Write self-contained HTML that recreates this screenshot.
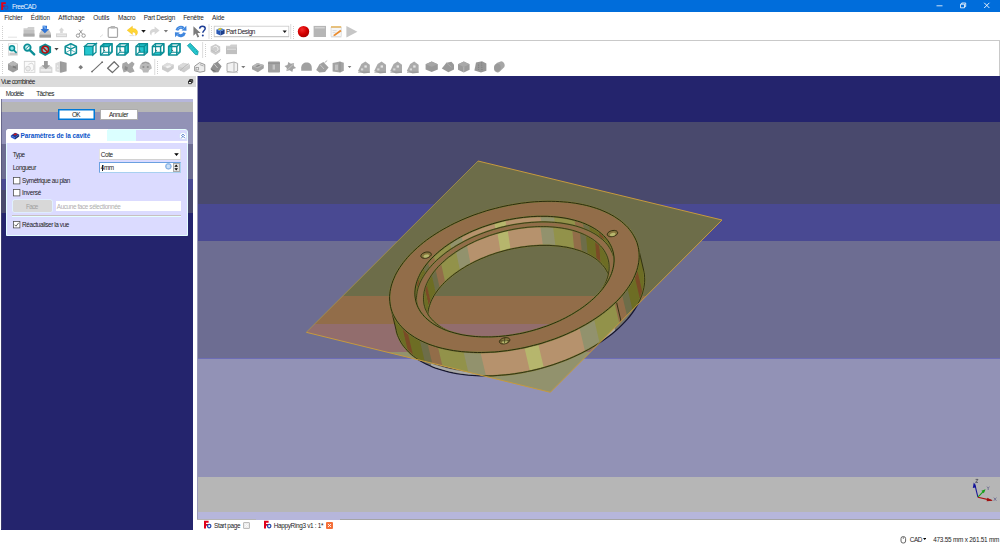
<!DOCTYPE html>
<html><head><meta charset="utf-8"><title>FreeCAD</title>
<style>
*{box-sizing:border-box;margin:0;padding:0}
html,body{width:1000px;height:547px;overflow:hidden;background:#fff}
body{font-family:"Liberation Sans",sans-serif;font-size:6.4px;color:#000;position:relative}
.abs{position:absolute}
.t{position:absolute;white-space:nowrap;line-height:9px;font-size:6.4px;color:#1c1c1c}
#title{left:0;top:0;width:1000px;height:12px;background:#006ddb}
.hl{position:absolute;height:1px;background:#c9c9c9}
.vl{position:absolute;width:1px;background:#c9c9c9}
.cb{position:absolute;width:7px;height:7px;border:1px solid #333;background:#fff}
</style></head><body>

<!-- title bar -->
<div id="title" class="abs"></div>
<svg class="abs" style="left:0;top:1px" width="10" height="10" viewBox="0 0 10 10">
  <path d="M1.2 1.2h4.6v1.8H3.2v1.4h2v1.7h-2v2.9H1.2z" fill="#e0001a"/>
  <circle cx="6.2" cy="6.6" r="1.7" fill="none" stroke="#2a4fb0" stroke-width="1.1"/>
</svg>
<div class="t" style="letter-spacing:-0.498px;left:12px;top:1.7px;color:#f0f6ff;font-size:6.6px">FreeCAD</div>
<svg class="abs" style="left:930px;top:0" width="70" height="12" viewBox="0 0 70 12">
  <path d="M6.5 5.8h6" stroke="#fff" stroke-width="0.8"/>
  <path d="M30.5 4.2h4v3.6h-4z M31.7 4.2v-1.2h4v3.6h-1.2" fill="none" stroke="#fff" stroke-width="0.8"/>
  <path d="M54.2 2.8l5.2 5.2M59.4 2.8l-5.2 5.2" stroke="#fff" stroke-width="0.9"/>
</svg>

<!-- menu -->
<div class="t" style="letter-spacing:-0.141px;left:4.2px;top:12.7px">Fichier</div>
<div class="t" style="letter-spacing:-0.050px;left:30.8px;top:12.7px">Édition</div>
<div class="t" style="letter-spacing:0.019px;left:58.2px;top:12.7px">Affichage</div>
<div class="t" style="letter-spacing:-0.024px;left:93.2px;top:12.7px">Outils</div>
<div class="t" style="letter-spacing:-0.053px;left:118px;top:12.7px">Macro</div>
<div class="t" style="letter-spacing:-0.199px;left:143.8px;top:12.7px">Part Design</div>
<div class="t" style="letter-spacing:-0.219px;left:183.2px;top:12.7px">Fenêtre</div>
<div class="t" style="letter-spacing:-0.074px;left:212px;top:12.7px">Aide</div>

<!-- toolbar frame lines -->
<div class="hl" style="left:0;top:40px;width:1000px"></div>
<div class="vl" style="left:999px;top:40px;height:36px"></div>

<!-- TOOLBARS -->
<svg id="tb" class="abs" style="left:0;top:23px" width="1000" height="53" viewBox="0 23 1000 53">
<rect x="2.2" y="26.0" width="0.8" height="0.8" fill="#b4b4b4"/>
<rect x="2.2" y="28.0" width="0.8" height="0.8" fill="#b4b4b4"/>
<rect x="2.2" y="30.0" width="0.8" height="0.8" fill="#b4b4b4"/>
<rect x="2.2" y="32.0" width="0.8" height="0.8" fill="#b4b4b4"/>
<rect x="2.2" y="34.0" width="0.8" height="0.8" fill="#b4b4b4"/>
<rect x="2.2" y="36.0" width="0.8" height="0.8" fill="#b4b4b4"/>
<rect x="2.2" y="38.0" width="0.8" height="0.8" fill="#b4b4b4"/>
<rect x="2.2" y="44.0" width="0.8" height="0.8" fill="#b4b4b4"/>
<rect x="2.2" y="46.0" width="0.8" height="0.8" fill="#b4b4b4"/>
<rect x="2.2" y="48.0" width="0.8" height="0.8" fill="#b4b4b4"/>
<rect x="2.2" y="50.0" width="0.8" height="0.8" fill="#b4b4b4"/>
<rect x="2.2" y="52.0" width="0.8" height="0.8" fill="#b4b4b4"/>
<rect x="2.2" y="54.0" width="0.8" height="0.8" fill="#b4b4b4"/>
<rect x="2.2" y="56.0" width="0.8" height="0.8" fill="#b4b4b4"/>
<rect x="2.2" y="61.0" width="0.8" height="0.8" fill="#b4b4b4"/>
<rect x="2.2" y="63.0" width="0.8" height="0.8" fill="#b4b4b4"/>
<rect x="2.2" y="65.0" width="0.8" height="0.8" fill="#b4b4b4"/>
<rect x="2.2" y="67.0" width="0.8" height="0.8" fill="#b4b4b4"/>
<rect x="2.2" y="69.0" width="0.8" height="0.8" fill="#b4b4b4"/>
<rect x="2.2" y="71.0" width="0.8" height="0.8" fill="#b4b4b4"/>
<rect x="2.2" y="73.0" width="0.8" height="0.8" fill="#b4b4b4"/>
<rect x="208.6" y="24.0" width="0.8" height="15.0" fill="#d4d4d4"/>
<rect x="211.0" y="26.0" width="0.8" height="0.8" fill="#b4b4b4"/>
<rect x="211.0" y="28.0" width="0.8" height="0.8" fill="#b4b4b4"/>
<rect x="211.0" y="30.0" width="0.8" height="0.8" fill="#b4b4b4"/>
<rect x="211.0" y="32.0" width="0.8" height="0.8" fill="#b4b4b4"/>
<rect x="211.0" y="34.0" width="0.8" height="0.8" fill="#b4b4b4"/>
<rect x="211.0" y="36.0" width="0.8" height="0.8" fill="#b4b4b4"/>
<rect x="211.0" y="38.0" width="0.8" height="0.8" fill="#b4b4b4"/>
<rect x="290.4" y="24.0" width="0.8" height="15.0" fill="#d4d4d4"/>
<rect x="293.2" y="26.0" width="0.8" height="0.8" fill="#b4b4b4"/>
<rect x="293.2" y="28.0" width="0.8" height="0.8" fill="#b4b4b4"/>
<rect x="293.2" y="30.0" width="0.8" height="0.8" fill="#b4b4b4"/>
<rect x="293.2" y="32.0" width="0.8" height="0.8" fill="#b4b4b4"/>
<rect x="293.2" y="34.0" width="0.8" height="0.8" fill="#b4b4b4"/>
<rect x="293.2" y="36.0" width="0.8" height="0.8" fill="#b4b4b4"/>
<rect x="293.2" y="38.0" width="0.8" height="0.8" fill="#b4b4b4"/>
<rect x="202.3" y="42.0" width="0.8" height="16.0" fill="#d4d4d4"/>
<rect x="205.2" y="44.0" width="0.8" height="0.8" fill="#b4b4b4"/>
<rect x="205.2" y="46.0" width="0.8" height="0.8" fill="#b4b4b4"/>
<rect x="205.2" y="48.0" width="0.8" height="0.8" fill="#b4b4b4"/>
<rect x="205.2" y="50.0" width="0.8" height="0.8" fill="#b4b4b4"/>
<rect x="205.2" y="52.0" width="0.8" height="0.8" fill="#b4b4b4"/>
<rect x="205.2" y="54.0" width="0.8" height="0.8" fill="#b4b4b4"/>
<rect x="205.2" y="56.0" width="0.8" height="0.8" fill="#b4b4b4"/>
<rect x="154.4" y="59.0" width="0.8" height="16.0" fill="#d4d4d4"/>
<rect x="157.1" y="61.0" width="0.8" height="0.8" fill="#b4b4b4"/>
<rect x="157.1" y="63.0" width="0.8" height="0.8" fill="#b4b4b4"/>
<rect x="157.1" y="65.0" width="0.8" height="0.8" fill="#b4b4b4"/>
<rect x="157.1" y="67.0" width="0.8" height="0.8" fill="#b4b4b4"/>
<rect x="157.1" y="69.0" width="0.8" height="0.8" fill="#b4b4b4"/>
<rect x="157.1" y="71.0" width="0.8" height="0.8" fill="#b4b4b4"/>
<rect x="157.1" y="73.0" width="0.8" height="0.8" fill="#b4b4b4"/>
<path d="M8 37.2h9" stroke="#dcdcdc" stroke-width="0.8"/>
<path d="M23.5 28.3h3.6l1-1.3h6.2v3h-10.8z" fill="#cfcfcf"/><path d="M23.5 30h11v6.5h-11z" fill="#c2c2c2"/><path d="M23.5 33.6h11v2.9h-11z" fill="#a9a9a9"/>
<path d="M39.5 33.2l2-3.2h7.5l2 3.2v4.3h-11.5z" fill="#c6c6c6"/><path d="M39.5 34.6h11.5v2.9h-11.5z" fill="#9c9c9c"/>
<path d="M42.6 25.8h4.4v3.2h2.2l-4.3 4.3-4.4-4.3h2.1z" fill="#2f74d6"/><path d="M42.6 25.8h2.4l2 3.2h-2.3z" fill="#6aa4ee"/>
<path d="M56 33.4h11v3.8h-11z" fill="#d4d4d4"/><path d="M57 34.6h9v1.4h-9z" fill="#e8e8e8"/><path d="M60.2 33v-2.6h-1.5l2.8-2.8 2.8 2.8h-1.5v2.6z" fill="#d8d8d8"/>
<g fill="none" stroke="#8e8e8e" stroke-width="0.9"><circle cx="78" cy="35.6" r="1.7"/><circle cx="83.6" cy="35.6" r="1.7"/><path d="M79 34.2l3.4-4.4M82.6 34.2l-3.4-4.4"/></g>
<path d="M100 37l3-2.4" stroke="#d0d0d0" stroke-width="0.7"/>
<rect x="108.2" y="27.6" width="9.3" height="9.8" rx="1.2" fill="#fff" stroke="#a6a6a6" stroke-width="1.2"/><rect x="110.6" y="26" width="4.5" height="2.4" rx=".6" fill="#b4b4b4"/>
<path d="M132.4 26.2l-5.2 4.1 5.2 4.1v-2.4c2.3-.1 3.6 1 3.3 3.6 1.7-1.1 2.1-2.9 1.6-4.4-.7-2-2.5-2.7-4.9-2.7z" fill="#ffd633" stroke="#f0b400" stroke-width=".4"/><path d="M129.5 35.6h5" stroke="#e0e0e0" stroke-width="1"/>
<path d="M141.2 30.1 H145.8 L143.5 32.7Z" fill="#1a1a1a"/>
<path d="M154.6 26.6l5 3.9-5 3.9v-2.3c-2.2-.1-3.4 1-3.1 3.4-1.6-1-2-2.7-1.5-4.1.6-1.9 2.3-2.5 4.6-2.5z" fill="#d6d6d6"/>
<path d="M163.8 30.1 H168.0 L165.9 32.5Z" fill="#7a7a7a"/>
<g fill="none" stroke="#3f86de" stroke-width="2.9"><path d="M176.9 30.4a4 4 0 0 1 6.6-2"/><path d="M184.5 32.6a4 4 0 0 1 -6.6 2"/></g>
<path d="M181.6 30.4l4.9.4-.2-5z" fill="#3f86de"/><path d="M179.8 32.6l-4.9-.4.2 5z" fill="#3f86de"/>
<path d="M177.6 29.2a3.6 3.6 0 0 1 4.6-1.4" fill="none" stroke="#8dbcf2" stroke-width=".8"/>
<path d="M193.4 26.2v9.6l2.4-2.2 1.7 3.9 1.7-.8-1.7-3.7h3.1z" fill="#7c7c7c"/>
<path d="M199.6 28.6c.2-1.6 1.4-2.4 2.8-2.4 1.6 0 2.8 1 2.8 2.4 0 1.9-2.4 2-2.4 4.2" fill="none" stroke="#1f3f96" stroke-width="1.5"/><circle cx="202.8" cy="35.6" r="1" fill="#1f3f96"/>
<rect x="214.2" y="26.2" width="74.6" height="10.4" fill="#fff" stroke="#c9c9c9" stroke-width="0.8"/><path d="M214 36.8h75" stroke="#bdbdbd" stroke-width="0.7"/>
<path d="M216.4 29.6l4.2 1.6v4.2l-4.2-1.6z" fill="#2a58b4"/><path d="M220.6 31.2l4-1.7v4.2l-4 1.7z" fill="#1d3f8c"/><path d="M216.4 29.6l4-1.9 4.2 1.8-4 1.7z" fill="#4a86d8"/><path d="M217.6 29.3l2.6-1.4 2.2.9-2.6 1.4z" fill="#e8c828"/>
<path d="M282.6 30.6 H286.8 L284.7 33.0Z" fill="#1a1a1a"/>
<radialGradient id="rg" cx=".38" cy=".32" r=".75"><stop offset="0" stop-color="#f42a2a"/><stop offset=".55" stop-color="#d40000"/><stop offset="1" stop-color="#a00000"/></radialGradient>
<circle cx="303.5" cy="31.6" r="5.7" fill="url(#rg)"/>
<rect x="313.6" y="25.9" width="12.4" height="11.1" fill="#b6b6b6"/><rect x="314.8" y="27" width="10" height="1.5" fill="#d2d2d2"/>
<rect x="331" y="27.6" width="10.2" height="9" fill="#f6f6f6" stroke="#cfcfcf" stroke-width=".6"/><rect x="331" y="26.2" width="10.2" height="1.5" fill="#e4b25a"/><path d="M332.6 30.6h4M332.6 32.6h3" stroke="#cfcfcf" stroke-width=".7"/><path d="M334 34.6l6.4-4.8 1.1 1.4-6.4 4.6-1.8.5z" fill="#ea8a2a"/><path d="M331 37h10.4" stroke="#d9d9d9" stroke-width=".8"/>
<path d="M346.4 25.9v11.6l11-5.8z" fill="#c6c6c6"/>
<rect x="8.4" y="43.8" width="9" height="11.4" fill="#fff" stroke="#c9c9c9" stroke-width=".6"/><path d="M9.4 52.6h7.6v2.4h-7.6z" fill="#c9c9c9"/>
<circle cx="12" cy="48.2" r="2.5" fill="#8fe6ea" stroke="#0b8e96" stroke-width="1.5"/><path d="M13.8 50.2l2.8 2.6" stroke="#0b8e96" stroke-width="1.8"/>
<circle cx="27.4" cy="47.6" r="3.2" fill="#dff8f8" stroke="#0b8e96" stroke-width="1.9"/><path d="M29.8 50.2l4.4 4.2" stroke="#0b8e96" stroke-width="2.4" stroke-linecap="round"/><path d="M25.8 48.8l3-2.6" stroke="#0b8e96" stroke-width="1"/>
<path d="M45.2 43.4l5.9 3.1v6.3l-5.9 3.1-5.9-3.1v-6.3z" fill="#0b8e96"/><circle cx="45.2" cy="49.6" r="3.3" fill="#7cc6c8" stroke="#b40e10" stroke-width="1.5"/><path d="M43 47.4l4.4 4.4" stroke="#b40e10" stroke-width="1.4"/>
<path d="M54.4 48.0 H58.6 L56.5 50.6Z" fill="#444"/>
<path d="M70.8 43.8l5.6 2.6v6.6l-5.6 2.6-5.6-2.6v-6.6z" fill="#fff" stroke="#0b8e96" stroke-width="1.5" stroke-linejoin="round"/><path d="M65.2 46.4l5.6 2.6 5.6-2.6M70.8 49v6.4" fill="none" stroke="#0b8e96" stroke-width="1.2"/><path d="M70.8 44v4.4M66 52.4l4.8-2.6 4.8 2.6" fill="none" stroke="#0b8e96" stroke-width=".7"/>
<path d="M84.6 46.4 L87.8 43.6 L96.0 43.6 L96.0 52.2 L92.8 55.0 L84.6 55.0Z" fill="#fff"/>
<path d="M84.6 46.4 L87.8 43.6 L96.0 43.6 L92.8 46.4Z" fill="#fff" stroke="#0b8e96" stroke-width="1.3"/>
<path d="M92.8 46.4 L96.0 43.6 L96.0 52.2 L92.8 55.0Z" fill="#fff" stroke="#0b8e96" stroke-width="1.3"/>
<path d="M84.6 46.4 L92.8 46.4 L92.8 55.0 L84.6 55.0Z" fill="#25c6ce" stroke="#0b8e96" stroke-width="1.1"/>
<path d="M100.6 46.4 L103.8 43.6 L112.0 43.6 L112.0 52.2 L108.8 55.0 L100.6 55.0Z" fill="#fff"/>
<path d="M100.6 46.4 L103.8 43.6 L112.0 43.6 L108.8 46.4Z" fill="#25c6ce"/>
<path d="M103.8 43.6 L112.0 43.6 L112.0 52.2 L103.8 52.2Z" fill="none" stroke="#0b8e96" stroke-width="1.05" stroke-linejoin="round"/>
<path d="M100.6 55.0 L103.8 52.2" stroke="#0b8e96" stroke-width="1.05"/>
<path d="M103.6 49.8 l1.6 1.2" stroke="#1a3a40" stroke-width=".7"/>
<path d="M100.6 46.4 L108.8 46.4 L108.8 55.0 L100.6 55.0Z" fill="none" stroke="#0b8e96" stroke-width="1.45" stroke-linejoin="round"/>
<path d="M100.6 46.4 L103.8 43.6" stroke="#0b8e96" stroke-width="1.35"/>
<path d="M108.8 46.4 L112.0 43.6" stroke="#0b8e96" stroke-width="1.35"/>
<path d="M108.8 55.0 L112.0 52.2" stroke="#0b8e96" stroke-width="1.35"/>
<path d="M103.8 43.6 L112.0 43.6 L112.0 52.2" fill="none" stroke="#0b8e96" stroke-width="1.45" stroke-linejoin="round"/>
<path d="M116.8 46.4 L120.0 43.6 L128.2 43.6 L128.2 52.2 L125.0 55.0 L116.8 55.0Z" fill="#fff"/>
<path d="M125.0 46.4 L128.2 43.6 L128.2 52.2 L125.0 55.0Z" fill="#25c6ce"/>
<path d="M120.0 43.6 L128.2 43.6 L128.2 52.2 L120.0 52.2Z" fill="none" stroke="#0b8e96" stroke-width="1.05" stroke-linejoin="round"/>
<path d="M116.8 55.0 L120.0 52.2" stroke="#0b8e96" stroke-width="1.05"/>
<path d="M119.8 49.8 l1.6 1.2" stroke="#1a3a40" stroke-width=".7"/>
<path d="M116.8 46.4 L125.0 46.4 L125.0 55.0 L116.8 55.0Z" fill="none" stroke="#0b8e96" stroke-width="1.45" stroke-linejoin="round"/>
<path d="M116.8 46.4 L120.0 43.6" stroke="#0b8e96" stroke-width="1.35"/>
<path d="M125.0 46.4 L128.2 43.6" stroke="#0b8e96" stroke-width="1.35"/>
<path d="M125.0 55.0 L128.2 52.2" stroke="#0b8e96" stroke-width="1.35"/>
<path d="M120.0 43.6 L128.2 43.6 L128.2 52.2" fill="none" stroke="#0b8e96" stroke-width="1.45" stroke-linejoin="round"/>
<path d="M136.0 46.4 L139.2 43.6 L147.4 43.6 L147.4 52.2 L144.2 55.0 L136.0 55.0Z" fill="#fff"/>
<path d="M139.2 43.6 L147.4 43.6 L147.4 52.2 L139.2 52.2Z" fill="#25c6ce"/>
<path d="M139.2 43.6 L147.4 43.6 L147.4 52.2 L139.2 52.2Z" fill="none" stroke="#0b8e96" stroke-width="1.05" stroke-linejoin="round"/>
<path d="M136.0 55.0 L139.2 52.2" stroke="#0b8e96" stroke-width="1.05"/>
<path d="M139.0 49.8 l1.6 1.2" stroke="#1a3a40" stroke-width=".7"/>
<path d="M136.0 46.4 L144.2 46.4 L144.2 55.0 L136.0 55.0Z" fill="none" stroke="#0b8e96" stroke-width="1.45" stroke-linejoin="round"/>
<path d="M136.0 46.4 L139.2 43.6" stroke="#0b8e96" stroke-width="1.35"/>
<path d="M144.2 46.4 L147.4 43.6" stroke="#0b8e96" stroke-width="1.35"/>
<path d="M144.2 55.0 L147.4 52.2" stroke="#0b8e96" stroke-width="1.35"/>
<path d="M139.2 43.6 L147.4 43.6 L147.4 52.2" fill="none" stroke="#0b8e96" stroke-width="1.45" stroke-linejoin="round"/>
<path d="M152.4 46.4 L155.6 43.6 L163.8 43.6 L163.8 52.2 L160.6 55.0 L152.4 55.0Z" fill="#fff"/>
<path d="M152.4 55.0 L155.6 52.2 L163.8 52.2 L160.6 55.0Z" fill="#25c6ce"/>
<path d="M155.6 43.6 L163.8 43.6 L163.8 52.2 L155.6 52.2Z" fill="none" stroke="#0b8e96" stroke-width="1.05" stroke-linejoin="round"/>
<path d="M152.4 55.0 L155.6 52.2" stroke="#0b8e96" stroke-width="1.05"/>
<path d="M155.4 49.8 l1.6 1.2" stroke="#1a3a40" stroke-width=".7"/>
<path d="M152.4 46.4 L160.6 46.4 L160.6 55.0 L152.4 55.0Z" fill="none" stroke="#0b8e96" stroke-width="1.45" stroke-linejoin="round"/>
<path d="M152.4 46.4 L155.6 43.6" stroke="#0b8e96" stroke-width="1.35"/>
<path d="M160.6 46.4 L163.8 43.6" stroke="#0b8e96" stroke-width="1.35"/>
<path d="M160.6 55.0 L163.8 52.2" stroke="#0b8e96" stroke-width="1.35"/>
<path d="M155.6 43.6 L163.8 43.6 L163.8 52.2" fill="none" stroke="#0b8e96" stroke-width="1.45" stroke-linejoin="round"/>
<path d="M168.6 46.4 L171.8 43.6 L180.0 43.6 L180.0 52.2 L176.8 55.0 L168.6 55.0Z" fill="#fff"/>
<path d="M168.6 46.4 L171.8 43.6 L171.8 52.2 L168.6 55.0Z" fill="#25c6ce"/>
<path d="M171.8 43.6 L180.0 43.6 L180.0 52.2 L171.8 52.2Z" fill="none" stroke="#0b8e96" stroke-width="1.05" stroke-linejoin="round"/>
<path d="M168.6 55.0 L171.8 52.2" stroke="#0b8e96" stroke-width="1.05"/>
<path d="M171.6 49.8 l1.6 1.2" stroke="#1a3a40" stroke-width=".7"/>
<path d="M168.6 46.4 L176.8 46.4 L176.8 55.0 L168.6 55.0Z" fill="none" stroke="#0b8e96" stroke-width="1.45" stroke-linejoin="round"/>
<path d="M168.6 46.4 L171.8 43.6" stroke="#0b8e96" stroke-width="1.35"/>
<path d="M176.8 46.4 L180.0 43.6" stroke="#0b8e96" stroke-width="1.35"/>
<path d="M176.8 55.0 L180.0 52.2" stroke="#0b8e96" stroke-width="1.35"/>
<path d="M171.8 43.6 L180.0 43.6 L180.0 52.2" fill="none" stroke="#0b8e96" stroke-width="1.45" stroke-linejoin="round"/>
<path d="M187.4 45.6l2.8-2.4 8 8.2-.6 3.4-2.4-.4z" fill="#25c6ce" stroke="#0b8e96" stroke-width=".7"/><path d="M190.6 46.6l1-1M192.4 48.4l1-1M194.2 50.2l1-1M196 52l1-1" stroke="#0b8e96" stroke-width=".6"/>
<path d="M215.6 44l4.6 2.4v5.6l-4.6 3-5-3v-5.6z" fill="#cdcdcd"/><path d="M213.4 47.4a2.6 2.6 0 1 1 2 4.2" fill="none" stroke="#f4f4f4" stroke-width="1"/><path d="M211 50l4.6 2.4 4.6-2.4" stroke="#b9b9b9" stroke-width=".7" fill="none"/>
<path d="M226 45.8h3.8l1-1.3h6.2v3h-11z" fill="#cfcfcf"/><path d="M226 47.2h11v6.9h-11z" fill="#c0c0c0"/><path d="M227 48.6h9v1.2h-9z" fill="#dcdcdc"/>
<path d="M13.0 61.0 L18.0 63.9 V69.7 L13.0 72.6 L8.0 69.7 V63.9Z" fill="#9c9c9c"/>
<path d="M13.0 61.0 L18.0 63.9 L13.0 66.8 L8.0 63.9Z" fill="#b6b6b6"/>
<path d="M12.6 65.4l3.6 1.4v2l-3.6-1.4z" fill="#7e7e7e"/>
<rect x="24.3" y="61.3" width="10.6" height="11" fill="#fafafa" stroke="#cfcfcf" stroke-width=".8"/><circle cx="28" cy="68.6" r="2.4" fill="#ececec" stroke="#c4c4c4" stroke-width=".7"/><path d="M28.4 64.4l3.6-1.4 1.8 2.6v4l-3 1.4" fill="none" stroke="#c8c8c8" stroke-width=".7"/>
<path d="M39.4 67.6l2-1.6h9l2 1.6v5.4h-13z" fill="#d6d6d6"/><path d="M40.6 69h10.6v2.4h-10.6z" fill="#ececec"/><path d="M44 61h3.8v4.2h2.4l-4.3 4-4.3-4h2.4z" fill="#9a9a9a"/>
<path d="M55.4 63.2l5-2 .4 11.6-5.4-1.6z" fill="#dadada"/><path d="M60.4 61.2l6.2 1.6v8.4l-5.8 1.6z" fill="#9e9e9e"/><path d="M57 65.6h1.2v1.2H57zM57.4 69h1.2v1.2h-1.2z" fill="#f6f6f6"/><path d="M60.6 61.6v11" stroke="#7e7e7e" stroke-width=".7"/>
<path d="M80.7 64.9l2.3 2.3-2.3 2.3-2.3-2.3z" fill="#7c7c7c"/>
<path d="M92 71.6l10.2-9.4" stroke="#6e6e6e" stroke-width="1.1"/><circle cx="92" cy="71.6" r=".9" fill="#6e6e6e"/><circle cx="102.2" cy="62.2" r=".9" fill="#6e6e6e"/>
<path d="M107.6 68.2l6.6-6.4 4.6 4.6-6.4 6.2z" fill="#fff" stroke="#6e6e6e" stroke-width="1.3" stroke-linejoin="round"/>
<path d="M122.4 63.6l4-1.8 2 2.4 3.6-2.6 2.6 2.2-2 3.6 2 4-4.6 1.6-3-1.8-3.4 1.4-1.6-5z" fill="#a6a6a6"/><path d="M125 66l3 1.6-1 3-2.6-1z" fill="#8a8a8a"/>
<path d="M139.6 68.6c0-4.4 2.6-7.2 6-7.2s6.2 2.8 6.2 7.2l-2.6 1.4-1 2.6h-5l-1-2.6z" fill="#b9b9b9"/><circle cx="143.4" cy="67" r="1.1" fill="#8e8e8e"/><circle cx="147.8" cy="67" r="1.1" fill="#8e8e8e"/><path d="M142 63.6l3.6-1.2 3.6 1.2" stroke="#8e8e8e" stroke-width=".8" fill="none"/>
<path d="M167.3 62.7 L173.8 64.8 V68.3 L167.9 72.4 L162.0 69.4 V66.1Z" fill="#cbcbcb"/>
<path d="M167.3 62.7 L173.8 64.8 L167.9 68.3 L162.0 66.1Z" fill="#dddddd"/>
<path d="M165.6 66.4l4-1.2 1.6 1.6-4 1.4z" fill="#f2f2f2"/>
<path d="M183.4 62.7 L190.0 64.8 V68.3 L184.0 72.4 L178.0 69.4 V66.1Z" fill="#cdcdcd"/>
<path d="M183.4 62.7 L190.0 64.8 L184.0 68.3 L178.0 66.1Z" fill="#dadada"/>
<path d="M180 70.4l8.6-7" stroke="#b4b4b4" stroke-width=".9"/>
<path d="M194.6 66.2l5-3.6 5.2 2v6.6l-4.8 1-5.4-1.4z" fill="#ececec" stroke="#8e8e8e" stroke-width=".9"/><rect x="196" y="67.4" width="2.6" height="2.6" fill="none" stroke="#8e8e8e" stroke-width=".7"/><path d="M199.8 64.6l3.8 1.4" stroke="#8e8e8e" stroke-width=".7"/>
<path d="M210.4 69l3.4-5.6 3.8-1.6 4 4.4-3.2 6-5 .4z" fill="#909090"/><path d="M213.8 63.4l3.8 4.6" stroke="#d8d8d8" stroke-width=".8"/><path d="M216.6 62.6l4-3" stroke="#808080" stroke-width=".8"/><path d="M211.4 69.6l4.2 1.8" stroke="#6a6a6a" stroke-width=".9"/>
<path d="M227 63.6l7-1.6 3.6 1.4v7.6l-3.4 1.4-7.2-1z" fill="#f2f2f2" stroke="#a4a4a4" stroke-width=".9"/><path d="M234 62.2v10" stroke="#a4a4a4" stroke-width=".8"/><path d="M226.6 72.6h11.4" stroke="#c4c4c4" stroke-width=".8"/>
<path d="M241.2 65.9 H245.4 L243.3 68.2Z" fill="#7a7a7a"/>
<path d="M257.3 63.0 L263.8 65.1 V68.3 L257.9 72.2 L252.0 69.3 V66.3Z" fill="#a2a2a2"/>
<path d="M257.3 63.0 L263.8 65.1 L257.9 68.3 L252.0 66.3Z" fill="#b8b8b8"/>
<path d="M255.4 66.2l3.4-1.4 1.6.8-3.4 1.4z" fill="#888"/>
<rect x="268" y="61.4" width="12" height="11.2" rx=".8" fill="#a2a2a2"/><rect x="272.6" y="64.6" width="2.4" height="5" fill="#c4c4c4"/><path d="M268 63.2h12" stroke="#8a8a8a" stroke-width=".8"/>
<path d="M296.1 67.9 L293.1 69.1 L292.3 72.0 L289.7 70.3 L286.5 71.1 L286.8 68.1 L284.5 66.1 L287.5 64.9 L288.3 62.0 L290.9 63.7 L294.1 62.9 L293.8 65.9Z" fill="#a4a4a4"/>
<path d="M286.6 70.6l7.4-7" stroke="#d0d0d0" stroke-width=".8"/>
<path d="M301.2 67.6c.2-3 2.4-5 5.4-5 3.2 0 5.2 2 5.2 5.6v2.6h-10.6z" fill="#a0a0a0"/>
<path d="M316.2 70l3.2-5.8 4-2.2 5.2 5.6-3.6 4.4-5.6.6z" fill="#a0a0a0"/><path d="M320 64.6l4 4.4" stroke="#cfcfcf" stroke-width=".8"/><path d="M324.6 62.6l2.6-2" stroke="#909090" stroke-width=".7"/>
<path d="M332.6 63l7.4-1.4 3.8 1.2v8l-3.6 1.6-7.6-1z" fill="#a4a4a4"/><rect x="335" y="64.6" width="3" height="5.6" fill="#c2c2c2"/><path d="M340 61.8v10.4" stroke="#8a8a8a" stroke-width=".7"/>
<path d="M347.8 66.0 H351.4 L349.6 68.0Z" fill="#7a7a7a"/>
<path d="M358.0 71.0 l3.4 -7 4 -2.4 4.4 3.2 v8 l-6 .8z" fill="#aaaaaa"/>
<rect x="364.4" y="65.4" width="2.4" height="2.2" fill="#e4e4e4"/><rect x="361.0" y="68.4" width="2.2" height="2" fill="#d8d8d8"/>
<path d="M358.2 72.2 h11.6" stroke="#8e8e8e" stroke-width=".8"/>
<path d="M374.2 71.0 l3.4 -7 4 -2.4 4.4 3.2 v8 l-6 .8z" fill="#aaaaaa"/>
<rect x="380.6" y="65.4" width="2.4" height="2.2" fill="#e4e4e4"/><rect x="377.2" y="68.4" width="2.2" height="2" fill="#d8d8d8"/>
<path d="M374.4 72.2 h11.6" stroke="#8e8e8e" stroke-width=".8"/>
<path d="M390.2 71.0 l3.4 -7 4 -2.4 4.4 3.2 v8 l-6 .8z" fill="#aaaaaa"/>
<rect x="396.6" y="65.4" width="2.4" height="2.2" fill="#e4e4e4"/><rect x="393.2" y="68.4" width="2.2" height="2" fill="#d8d8d8"/>
<path d="M390.4 72.2 h11.6" stroke="#8e8e8e" stroke-width=".8"/>
<path d="M406.8 71.0 l3.4 -7 4 -2.4 4.4 3.2 v8 l-6 .8z" fill="#aaaaaa"/>
<rect x="413.2" y="65.4" width="2.4" height="2.2" fill="#e4e4e4"/><rect x="409.8" y="68.4" width="2.2" height="2" fill="#d8d8d8"/>
<path d="M407.0 72.2 h11.6" stroke="#8e8e8e" stroke-width=".8"/>
<path d="M431.7 61.6 L437.8 64.2 V69.4 L431.7 72.0 L425.6 69.4 V64.2Z" fill="#999999"/>
<path d="M431.7 61.6 L437.8 64.2 L431.7 66.8 L425.6 64.2Z" fill="#a6a6a6"/>
<path d="M441.8 68.4l4.6-5.6 5-1 2.6 2.6v5l-5.6 2.8z" fill="#999"/><path d="M446.4 62.8l5 4.4" stroke="#b4b4b4" stroke-width=".7"/>
<path d="M463.8 61.4 L469.6 64.2 V69.7 L463.8 72.4 L458.0 69.7 V64.2Z" fill="#9b9b9b"/>
<path d="M463.8 61.4 L469.6 64.2 L463.8 66.9 L458.0 64.2Z" fill="#a9a9a9"/>
<path d="M463.8 67v5" stroke="#c4c4c4" stroke-width=".7"/>
<path d="M474.4 70.6l1.6-8 6-1.4 4.4 2.2v7.4l-5.4 1.6z" fill="#979797"/><path d="M478.6 64.6v5M481.6 62.4l.4 8" stroke="#6e6e6e" stroke-width=".7" stroke-dasharray="1 1.2"/>
<path d="M496.6 63l4-1.6a3.6 4 0 0 1 3.8 5.6l-4.6 4.6a3.6 4 0 0 1 -5.8 -3z" fill="#a6a6a6"/><ellipse cx="497.4" cy="67.6" rx="3.4" ry="3.8" fill="#9a9a9a"/>
</svg>

<div class="t" style="letter-spacing:-0.399px;left:226px;top:26.9px">Part Design</div>

<!-- left dock -->
<div class="abs" style="left:0;top:76px;width:196px;height:11px;background:#dbdbdb"></div>
<div class="t" style="letter-spacing:-0.569px;left:1px;top:77.1px">Vue combinée</div>
<svg class="abs" style="left:188.4px;top:79.4px" width="5.4" height="5.4" viewBox="0 0 6 6"><path d="M0.6 2.4h3.2v2.8h-3.2z M1.8 2.4v-1.5h3.4v2.9h-1.4" fill="#fff" stroke="#222" stroke-width="1"/><path d="M1.8 1.1h3.4M0.6 2.6h3.2" stroke="#111" stroke-width="1.1"/></svg>
<div class="t" style="letter-spacing:-0.561px;left:5.8px;top:88.9px">Modèle</div>
<div class="t" style="letter-spacing:-0.528px;left:36.2px;top:88.9px">Tâches</div>

<!-- task panel background -->
<div class="abs" style="left:1px;top:99px;width:192px;height:430.5px;background:#24246d"></div>
<div class="abs" style="left:1px;top:99px;width:192px;height:3px;background:#b6b6db"></div>
<div class="abs" style="left:1px;top:102px;width:192px;height:10px;background:#b6b6b6"></div>
<div class="abs" style="left:1px;top:111.5px;width:192px;height:32.5px;background:#9292b6"></div>
<div class="abs" style="left:1px;top:143.6px;width:192px;height:35px;background:#6d6d92"></div>
<div class="abs" style="left:1px;top:178.5px;width:192px;height:11.5px;background:#494992"></div>
<div class="abs" style="left:1px;top:190px;width:192px;height:23px;background:#49496d"></div>
<div class="abs" style="left:1px;top:99px;width:1px;height:430px;background:#49496d;opacity:.6"></div>

<!-- buttons -->
<div class="abs" style="left:57.5px;top:109px;width:37.5px;height:11px;background:#fff;border:1px solid #0078d7;box-shadow:inset 0 0 0 0.5px #0078d7"></div>
<div class="t" style="letter-spacing:-0.717px;left:72px;top:109.9px">OK</div>
<div class="abs" style="left:99.5px;top:109px;width:38px;height:11px;background:#fff;border:1px solid #adadad"></div>
<div class="t" style="letter-spacing:-0.433px;left:109px;top:109.9px">Annuler</div>

<!-- box -->
<div class="abs" style="left:6px;top:129px;width:182.3px;height:106.7px;background:#dbdbff;border:1px solid #e4ffff;border-radius:3px 3px 0 0"></div>
<div class="abs" style="left:6px;top:129px;width:102px;height:13.6px;background:#fff;border-radius:3px 0 0 0"></div>
<div class="abs" style="left:107px;top:129.5px;width:29px;height:11.8px;background:#dbffff"></div>
<div class="abs" style="left:6.5px;top:141.2px;width:181px;height:1.4px;background:#fff"></div>
<svg class="abs" style="left:9.5px;top:131px" width="10" height="10" viewBox="0 0 10 10">
  <path d="M0.8 4.6l4.2-2.8 4.2 1.6-4.2 3z" fill="#1a3a9a"/><path d="M0.8 4.6v1.7l4.2 2.2v-2.1z" fill="#2a5ad0"/><path d="M5 6.4v2.1l4.2-3.1v-2z" fill="#16307a"/>
  <path d="M3 3.7l2.3-1.5 2.2.8-2.3 1.6z" fill="#d01818"/>
</svg>
<div class="t" style="letter-spacing:-0.064px;left:20.6px;top:131.3px;font-weight:bold;color:#0a52c8">Paramètres de la cavité</div>
<svg class="abs" style="left:178.6px;top:131.6px" width="8" height="8" viewBox="0 0 8 8"><circle cx="4" cy="4" r="3.6" fill="#fff" stroke="#c8d8f6" stroke-width="0.6"/><path d="M2.4 3.8L4 2.2l1.6 1.6M2.4 5.9L4 4.3l1.6 1.6" fill="none" stroke="#2a5fc0" stroke-width="0.9"/></svg>

<div class="t" style="letter-spacing:-0.515px;left:12.8px;top:149.5px">Type</div>
<div class="abs" style="left:99.4px;top:149.2px;width:81.6px;height:10.6px;background:#fff;border-bottom:1.2px solid #d2d2d2;border-left:.5px solid #e4e4e4;border-right:.5px solid #e4e4e4"></div>
<div class="t" style="letter-spacing:-0.375px;left:100.8px;top:149.5px">Cote</div>
<svg class="abs" style="left:174px;top:152.6px" width="5" height="3.2" viewBox="0 0 5 3.2"><path d="M0.2 0.2h4.6L2.5 3z" fill="#000"/></svg>

<div class="t" style="letter-spacing:-0.502px;left:12.8px;top:162.7px">Longueur</div>
<div class="abs" style="left:98.6px;top:161.8px;width:82.8px;height:11.6px;background:#dbffff"></div>
<div class="abs" style="left:99.2px;top:162.4px;width:81.8px;height:10.4px;background:#fff;border:1px solid #6aa0e0;border-bottom-color:#a8d0f0;border-right-color:#a8d0f0"></div>
<div class="t" style="letter-spacing:-0.401px;left:100.8px;top:162.9px">4mm</div>
<div class="abs" style="left:102px;top:164.6px;width:0.6px;height:6.8px;background:#222"></div>
<svg class="abs" style="left:165px;top:163px" width="7" height="7" viewBox="0 0 7 7"><circle cx="3.4" cy="3.3" r="2.9" fill="#a4c8f0" stroke="#6a98d8" stroke-width="0.6"/><path d="M2 2.8h2.8M2 4.1h2.8" stroke="#fff" stroke-width="0.7"/></svg>
<div class="abs" style="left:173px;top:163.4px;width:6.8px;height:8.4px;background:#e4e4e4;border:0.5px solid #aaa"></div>
<svg class="abs" style="left:174.2px;top:164.2px" width="4.4" height="7" viewBox="0 0 4.4 7"><path d="M0.4 2.7L2.2 0.6 4 2.7zM0.4 4.3L2.2 6.4 4 4.3z" fill="#000"/></svg>

<svg class="abs" style="left:12.8px;top:177.1px" width="8" height="8" viewBox="0 0 8 8"><rect x="0.5" y="0.5" width="6.4" height="6.4" fill="#fff" stroke="#4a4a4a" stroke-width="0.75"/></svg>
<div class="t" style="letter-spacing:-0.404px;left:22.1px;top:176.3px">Symétrique au plan</div>
<svg class="abs" style="left:12.8px;top:188.9px" width="8" height="8" viewBox="0 0 8 8"><rect x="0.5" y="0.5" width="6.4" height="6.4" fill="#fff" stroke="#4a4a4a" stroke-width="0.75"/></svg>
<div class="t" style="letter-spacing:-0.296px;left:22.1px;top:188.1px">Inversé</div>

<div class="abs" style="left:13px;top:200.4px;width:39px;height:11.4px;background:#d8d8d8;border-radius:1.5px;box-shadow:0 0 0 .6px #e4ffff"></div>
<div class="t" style="letter-spacing:-0.680px;left:26.1px;top:201.5px;color:#a0a0a0">Face</div>
<div class="abs" style="left:55.7px;top:201px;width:125.5px;height:9.8px;background:#fff"></div>
<div class="t" style="letter-spacing:-0.396px;left:56.8px;top:201.5px;color:#b0b0b0">Aucune face sélectionnée</div>

<div class="abs" style="left:12.2px;top:215px;width:169px;height:0.8px;background:#c8c0c0"></div>
<div class="abs" style="left:12.2px;top:215.8px;width:169px;height:1px;background:#e4ffff"></div>

<svg class="abs" style="left:12.8px;top:220.9px" width="8" height="8" viewBox="0 0 8 8"><rect x="0.5" y="0.5" width="6.4" height="6.4" fill="#fff" stroke="#4a4a4a" stroke-width="0.75"/></svg>
<svg class="abs" style="left:13px;top:221px" width="7" height="7" viewBox="0 0 7 7"><path d="M1.5 3.7l1.5 1.5 2.7-3.4" fill="none" stroke="#333" stroke-width="0.8"/></svg>
<div class="t" style="letter-spacing:-0.393px;left:22.1px;top:220px">Réactualiser la vue</div>

<!-- 3D viewport -->
<div class="abs" style="left:197px;top:76px;width:803px;height:444px;overflow:hidden">
  <svg id="scene" class="abs" style="left:0;top:0" width="803" height="444" viewBox="197 76 803 444">
    <g shape-rendering="crispEdges">
    <rect x="197" y="76" width="803" height="46" fill="#24246d"/>
    <rect x="197" y="122" width="803" height="82" fill="#49496d"/>
    <rect x="197" y="204" width="803" height="37" fill="#494992"/>
    <rect x="197" y="241" width="803" height="117" fill="#6d6d92"/>
    <rect x="197" y="358" width="803" height="1" fill="#6d6db6"/>
    <rect x="197" y="359" width="803" height="118" fill="#9292b6"/>
    <rect x="197" y="477" width="803" height="35" fill="#b6b6b6"/>
    <rect x="197" y="512" width="803" height="8" fill="#b6b6db"/>
    <rect x="197" y="76" width="0.7" height="444" fill="#9a9ab6"/>
    </g>
    <defs>
<clipPath id="cpl"><path d="M478.0 161.0 L722.0 220.0 L550.3 392.3 L306.3 332.3Z"/></clipPath>
<clipPath id="ca1"><path d="M595.9 296.3 L593.8 298.3 L591.7 300.2 L589.5 302.1 L587.1 304.0 L584.7 305.9 L582.2 307.7 L579.6 309.5 L576.9 311.2 L574.2 312.9 L571.4 314.6 L568.5 316.2 L565.5 317.8 L562.5 319.3 L559.4 320.8 L556.3 322.2 L553.1 323.5 L549.9 324.8 L546.6 326.1 L543.3 327.2 L540.0 328.3 L536.6 329.4 L533.2 330.4 L529.8 331.3 L526.3 332.2 L522.9 333.0 L519.4 333.7 L515.9 334.3 L512.4 334.9 L509.0 335.4 L505.5 335.8 L502.1 336.2 L498.6 336.5 L495.2 336.7 L491.8 336.9 L488.4 336.9 L485.1 336.9 L481.8 336.9 L478.5 336.7 L475.3 336.5 L472.1 336.2 L469.0 335.8 L465.9 335.4 L462.9 334.9 L460.0 334.3 L457.1 333.6 L454.3 332.9 L451.6 332.1 L448.9 331.3 L446.4 330.4 L443.9 329.4 L441.5 328.3 L439.1 327.2 L436.9 326.0 L434.8 324.8 L432.7 323.5 L430.8 322.1 L429.0 320.7 L427.2 319.2 L425.6 317.7 L424.1 316.2 L422.7 314.5 L421.4 312.9 L420.2 311.2 L419.2 309.4 L418.2 307.6 L417.4 305.8 L416.7 304.0 L416.1 302.1 L415.6 300.1 L415.3 298.2 L415.0 296.2 L414.9 294.2 L414.9 292.2 L415.1 290.1 L415.3 288.1 L415.7 286.0 L416.2 283.9 L416.8 281.8 L417.5 279.7 L418.4 277.6 L419.4 275.5 L420.4 273.4 L421.6 271.3 L423.0 269.2 L424.4 267.1 L425.9 265.0 L427.5 263.0 L429.3 260.9 L431.1 258.9 L433.1 256.9 L435.2 254.9 L437.3 253.0 L439.5 251.1 L441.9 249.2 L444.3 247.3 L446.8 245.5 L449.4 243.7 L452.1 242.0 L454.8 240.3 L457.6 238.6 L460.5 237.0 L463.5 235.4 L466.5 233.9 L469.6 232.4 L472.7 231.0 L475.9 229.7 L479.1 228.4 L482.4 227.1 L485.7 226.0 L489.0 224.9 L492.4 223.8 L495.8 222.8 L499.2 221.9 L502.7 221.0 L506.1 220.2 L509.6 219.5 L513.1 218.9 L516.6 218.3 L520.0 217.8 L523.5 217.4 L526.9 217.0 L530.4 216.7 L533.8 216.5 L537.2 216.3 L540.6 216.3 L543.9 216.3 L547.2 216.3 L550.5 216.5 L553.7 216.7 L556.9 217.0 L560.0 217.4 L563.1 217.8 L566.1 218.3 L569.0 218.9 L571.9 219.6 L574.7 220.3 L577.4 221.1 L580.1 221.9 L582.6 222.8 L585.1 223.8 L587.5 224.9 L589.9 226.0 L592.1 227.2 L594.2 228.4 L596.3 229.7 L598.2 231.1 L600.0 232.5 L601.8 234.0 L603.4 235.5 L604.9 237.0 L606.3 238.7 L607.6 240.3 L608.8 242.0 L609.8 243.8 L610.8 245.6 L611.6 247.4 L612.3 249.2 L612.9 251.1 L613.4 253.1 L613.7 255.0 L614.0 257.0 L614.1 259.0 L614.1 261.0 L613.9 263.1 L613.7 265.1 L613.3 267.2 L612.8 269.3 L612.2 271.4 L611.5 273.5 L610.6 275.6 L609.6 277.7 L608.6 279.8 L607.4 281.9 L606.0 284.0 L604.6 286.1 L603.1 288.2 L601.5 290.2 L599.7 292.3 L597.9 294.3 L595.9 296.3Z"/></clipPath>
<clipPath id="ca3"><path d="M592.2 301.1 L590.2 303.0 L588.2 304.8 L586.2 306.6 L584.0 308.4 L581.7 310.1 L579.4 311.8 L577.0 313.5 L574.5 315.1 L571.9 316.7 L569.3 318.2 L566.6 319.7 L563.9 321.2 L561.0 322.6 L558.2 324.0 L555.3 325.3 L552.3 326.5 L549.3 327.7 L546.2 328.9 L543.2 330.0 L540.0 331.0 L536.9 332.0 L533.7 332.9 L530.5 333.8 L527.3 334.6 L524.1 335.3 L520.9 336.0 L517.6 336.6 L514.4 337.1 L511.2 337.6 L507.9 338.0 L504.7 338.4 L501.5 338.6 L498.3 338.8 L495.1 339.0 L492.0 339.0 L488.9 339.0 L485.8 339.0 L482.8 338.8 L479.8 338.6 L476.8 338.3 L473.9 338.0 L471.0 337.6 L468.2 337.1 L465.5 336.6 L462.8 336.0 L460.2 335.3 L457.7 334.6 L455.2 333.8 L452.8 332.9 L450.5 332.0 L448.2 331.0 L446.1 329.9 L444.0 328.8 L442.0 327.7 L440.1 326.5 L438.3 325.2 L436.6 323.9 L435.0 322.5 L433.5 321.1 L432.1 319.7 L430.8 318.2 L429.5 316.6 L428.4 315.0 L427.5 313.4 L426.6 311.7 L425.8 310.0 L425.1 308.3 L424.6 306.5 L424.1 304.7 L423.8 302.9 L423.6 301.1 L423.5 299.2 L423.5 297.3 L423.6 295.4 L423.9 293.5 L424.2 291.6 L424.7 289.6 L425.2 287.7 L425.9 285.7 L426.7 283.7 L427.6 281.8 L428.6 279.8 L429.8 277.9 L431.0 275.9 L432.3 274.0 L433.7 272.0 L435.3 270.1 L436.9 268.2 L438.6 266.3 L440.4 264.5 L442.4 262.6 L444.4 260.8 L446.4 259.0 L448.6 257.2 L450.9 255.5 L453.2 253.8 L455.6 252.1 L458.1 250.5 L460.7 248.9 L463.3 247.4 L466.0 245.9 L468.7 244.4 L471.6 243.0 L474.4 241.6 L477.3 240.3 L480.3 239.1 L483.3 237.9 L486.4 236.7 L489.4 235.6 L492.6 234.6 L495.7 233.6 L498.9 232.7 L502.1 231.8 L505.3 231.0 L508.5 230.3 L511.7 229.6 L515.0 229.0 L518.2 228.5 L521.4 228.0 L524.7 227.6 L527.9 227.2 L531.1 227.0 L534.3 226.8 L537.5 226.6 L540.6 226.6 L543.7 226.6 L546.8 226.6 L549.8 226.8 L552.8 227.0 L555.8 227.3 L558.7 227.6 L561.6 228.0 L564.4 228.5 L567.1 229.0 L569.8 229.6 L572.4 230.3 L574.9 231.0 L577.4 231.8 L579.8 232.7 L582.1 233.6 L584.4 234.6 L586.5 235.7 L588.6 236.8 L590.6 237.9 L592.5 239.1 L594.3 240.4 L596.0 241.7 L597.6 243.1 L599.1 244.5 L600.5 245.9 L601.8 247.4 L603.1 249.0 L604.2 250.6 L605.1 252.2 L606.0 253.9 L606.8 255.6 L607.5 257.3 L608.0 259.1 L608.5 260.9 L608.8 262.7 L609.0 264.5 L609.1 266.4 L609.1 268.3 L609.0 270.2 L608.7 272.1 L608.4 274.0 L607.9 276.0 L607.4 277.9 L606.7 279.9 L605.9 281.9 L605.0 283.8 L604.0 285.8 L602.8 287.7 L601.6 289.7 L600.3 291.6 L598.9 293.6 L597.3 295.5 L595.7 297.4 L594.0 299.3 L592.2 301.1Z"/></clipPath>
<clipPath id="chole"><path d="M593.8 318.8 L591.9 320.6 L589.9 322.4 L587.9 324.1 L585.7 325.9 L583.5 327.6 L581.2 329.2 L578.8 330.9 L576.4 332.5 L573.8 334.0 L571.3 335.6 L568.6 337.0 L565.9 338.5 L563.1 339.9 L560.3 341.2 L557.4 342.5 L554.5 343.7 L551.6 344.9 L548.6 346.1 L545.5 347.1 L542.5 348.2 L539.4 349.1 L536.2 350.0 L533.1 350.9 L529.9 351.7 L526.8 352.4 L523.6 353.0 L520.4 353.6 L517.2 354.2 L514.0 354.6 L510.9 355.0 L507.7 355.4 L504.5 355.6 L501.4 355.8 L498.3 356.0 L495.2 356.0 L492.1 356.0 L489.1 356.0 L486.1 355.8 L483.1 355.6 L480.2 355.4 L477.4 355.0 L474.6 354.6 L471.8 354.2 L469.1 353.6 L466.5 353.0 L463.9 352.4 L461.4 351.6 L459.0 350.9 L456.6 350.0 L454.3 349.1 L452.1 348.1 L450.0 347.1 L447.9 346.0 L446.0 344.9 L444.1 343.7 L442.3 342.5 L440.6 341.2 L439.1 339.8 L437.6 338.4 L436.2 337.0 L434.9 335.5 L433.7 334.0 L432.6 332.4 L431.7 330.8 L430.8 329.2 L430.0 327.5 L429.4 325.8 L428.8 324.1 L428.4 322.3 L428.1 320.5 L427.9 318.7 L427.8 316.9 L427.8 315.0 L427.9 313.1 L428.1 311.2 L428.5 309.3 L428.9 307.4 L429.5 305.5 L430.2 303.6 L430.9 301.6 L431.8 299.7 L432.8 297.8 L433.9 295.8 L435.1 293.9 L436.4 292.0 L437.8 290.1 L439.3 288.2 L440.9 286.3 L442.6 284.5 L444.4 282.6 L446.3 280.8 L448.3 279.0 L450.3 277.3 L452.5 275.5 L454.7 273.8 L457.0 272.2 L459.4 270.5 L461.8 268.9 L464.4 267.4 L466.9 265.8 L469.6 264.4 L472.3 262.9 L475.1 261.5 L477.9 260.2 L480.8 258.9 L483.7 257.7 L486.6 256.5 L489.6 255.3 L492.7 254.3 L495.7 253.2 L498.8 252.3 L502.0 251.4 L505.1 250.5 L508.3 249.7 L511.4 249.0 L514.6 248.4 L517.8 247.8 L521.0 247.2 L524.2 246.8 L527.3 246.4 L530.5 246.0 L533.7 245.8 L536.8 245.6 L539.9 245.4 L543.0 245.4 L546.1 245.4 L549.1 245.4 L552.1 245.6 L555.1 245.8 L558.0 246.0 L560.8 246.4 L563.6 246.8 L566.4 247.2 L569.1 247.8 L571.7 248.4 L574.3 249.0 L576.8 249.8 L579.2 250.5 L581.6 251.4 L583.9 252.3 L586.1 253.3 L588.2 254.3 L590.3 255.4 L592.2 256.5 L594.1 257.7 L595.9 258.9 L597.6 260.2 L599.1 261.6 L600.6 263.0 L602.0 264.4 L603.3 265.9 L604.5 267.4 L605.6 269.0 L606.5 270.6 L607.4 272.2 L608.2 273.9 L608.8 275.6 L609.4 277.3 L609.8 279.1 L610.1 280.9 L610.3 282.7 L610.4 284.5 L610.4 286.4 L610.3 288.3 L610.1 290.2 L609.7 292.1 L609.3 294.0 L608.7 295.9 L608.0 297.8 L607.3 299.8 L606.4 301.7 L605.4 303.6 L604.3 305.6 L603.1 307.5 L601.8 309.4 L600.4 311.3 L598.9 313.2 L597.3 315.1 L595.6 316.9 L593.8 318.8Z"/></clipPath>
</defs>
<path d="M643.6 270.0 L644.1 272.4 L644.5 274.9 L644.6 277.4 L644.7 279.9 L644.6 282.5 L644.3 285.0 L643.9 287.6 L643.3 290.2 L642.6 292.9 L641.7 295.5 L640.7 298.1 L639.5 300.8 L638.2 303.4 L636.8 306.0 L635.2 308.7 L633.4 311.3 L631.6 313.9 L629.6 316.5 L627.4 319.1 L625.1 321.6 L622.7 324.1 L620.2 326.6 L617.6 329.1 L614.8 331.5 L611.9 333.9 L608.9 336.2 L605.8 338.5 L602.6 340.8 L599.3 343.0 L595.9 345.1 L592.4 347.2 L588.8 349.3 L585.1 351.2 L581.3 353.2 L577.5 355.0 L573.6 356.8 L569.7 358.5 L565.6 360.2 L561.5 361.7 L557.4 363.2 L553.2 364.7 L549.0 366.0 L544.8 367.3 L540.5 368.5 L536.2 369.6 L531.9 370.6 L527.5 371.5 L523.2 372.4 L518.8 373.1 L514.4 373.8 L510.1 374.4 L505.8 374.8 L501.4 375.2 L497.2 375.5 L492.9 375.8 L488.6 375.9 L484.5 375.9 L480.3 375.8 L476.2 375.7 L472.1 375.4 L468.1 375.1 L464.2 374.7 L460.4 374.2 L456.6 373.6 L452.8 372.9 L449.2 372.1 L445.7 371.2 L442.2 370.2 L438.9 369.2 L435.6 368.1 L432.4 366.8 L429.4 365.5 L426.4 364.2 L423.6 362.7 L420.9 361.2 L418.3 359.6 L415.8 357.9 L413.5 356.2 L411.3 354.4 L409.2 352.5 L407.3 350.5 L405.5 348.5 L403.8 346.5 L402.3 344.4 L400.9 342.2 L399.7 340.0 L398.6 337.7 L397.6 335.4 L396.8 333.0 L396.2 330.6 L395.1 325.8 L395.7 328.2 L396.5 330.6 L397.5 332.9 L398.6 335.2 L399.8 337.4 L401.2 339.6 L402.7 341.7 L404.4 343.7 L406.2 345.7 L408.1 347.7 L410.2 349.6 L412.4 351.4 L414.7 353.1 L417.2 354.8 L419.8 356.4 L422.5 357.9 L425.3 359.4 L428.3 360.7 L431.3 362.0 L434.5 363.3 L437.8 364.4 L441.1 365.4 L444.6 366.4 L448.1 367.3 L451.7 368.1 L455.5 368.8 L459.3 369.4 L463.1 369.9 L467.0 370.3 L471.0 370.6 L475.1 370.9 L479.2 371.0 L483.4 371.1 L487.5 371.1 L491.8 371.0 L496.1 370.7 L500.3 370.4 L504.7 370.0 L509.0 369.6 L513.3 369.0 L517.7 368.3 L522.1 367.6 L526.4 366.7 L530.8 365.8 L535.1 364.8 L539.4 363.7 L543.7 362.5 L547.9 361.2 L552.1 359.9 L556.3 358.4 L560.4 356.9 L564.5 355.4 L568.6 353.7 L572.5 352.0 L576.4 350.2 L580.2 348.4 L584.0 346.4 L587.7 344.5 L591.3 342.4 L594.8 340.3 L598.2 338.2 L601.5 336.0 L604.7 333.7 L607.8 331.4 L610.8 329.1 L613.7 326.7 L616.5 324.3 L619.1 321.8 L621.6 319.3 L624.0 316.8 L626.3 314.3 L628.5 311.7 L630.5 309.1 L632.3 306.5 L634.1 303.9 L635.7 301.2 L637.1 298.6 L638.4 296.0 L639.6 293.3 L640.6 290.7 L641.5 288.1 L642.2 285.4 L642.8 282.8 L643.2 280.2 L643.5 277.7 L643.6 275.1 L643.5 272.6 L643.4 270.1 L643.0 267.6 L642.5 265.2Z" fill="#77776d" stroke="#161630" stroke-width="1.3"/>
<path d="M504.1 374.2 L499.8 374.6 L495.5 374.8 L491.2 375.0 L487.0 375.1 L482.8 375.1 L478.7 375.0 L474.6 374.8 L470.6 374.5 L466.6 374.2 L462.7 373.7 L458.9 373.2 L455.1 372.5 L451.4 371.8 L447.8 371.0 L444.3 370.1 L440.9 369.1 L437.5 368.0 L434.3 366.9 L431.2 365.6 L430.7 363.1 L433.8 364.4 L437.0 365.5 L440.4 366.6 L443.8 367.6 L447.3 368.5 L450.9 369.3 L454.6 370.0 L458.4 370.7 L462.2 371.2 L466.1 371.7 L470.1 372.0 L474.1 372.3 L478.2 372.5 L482.3 372.6 L486.5 372.6 L490.7 372.5 L495.0 372.3 L499.3 372.1 L503.6 371.7Z" fill="#a8a8a8"/>
<path d="M615.0 330.3 L612.0 332.8 L608.8 335.3 L605.5 337.8 L602.1 340.2 L598.6 342.5 L594.9 344.8 L591.2 347.0 L587.3 349.1 L586.8 346.6 L590.7 344.5 L594.4 342.3 L598.1 340.0 L601.6 337.7 L605.0 335.3 L608.3 332.8 L611.5 330.3 L614.5 327.8Z" fill="#a8a8a8"/>
<g clip-path="url(#cpl)" shape-rendering="crispEdges">
<rect x="300" y="150" width="430" height="145.5" fill="#6d6d49"/>
<rect x="300" y="295.5" width="430" height="28.5" fill="#926d49"/>
<rect x="300" y="324" width="430" height="27.5" fill="#926d6d"/>
<rect x="300" y="351.5" width="430" height="50" fill="#92926d"/>
</g>
<g clip-path="url(#cpl)">
<path d="M532.2 345.8 L527.5 346.9 L522.7 348.0 L528.2 371.4 L533.0 370.3 L537.7 369.2Z" fill="#b6b66d"/>
<path d="M540.0 343.7 L535.3 345.0 L530.5 346.2 L536.0 369.6 L540.8 368.4 L545.5 367.1Z" fill="#b6b66d"/>
<path d="M524.4 347.6 L519.8 348.5 L515.2 349.4 L510.6 350.1 L506.0 350.8 L501.4 351.3 L496.8 351.8 L492.3 352.1 L487.7 352.3 L483.2 352.5 L478.8 352.5 L484.3 375.9 L488.7 375.9 L493.2 375.7 L497.8 375.5 L502.3 375.2 L506.9 374.7 L511.5 374.2 L516.1 373.5 L520.7 372.8 L525.3 371.9 L529.9 371.0Z" fill="#b6926d"/>
<path d="M580.9 327.1 L577.0 329.2 L572.9 331.2 L568.8 333.1 L564.6 334.9 L560.4 336.7 L556.1 338.3 L551.7 339.9 L547.2 341.4 L542.8 342.9 L538.3 344.2 L543.8 367.6 L548.3 366.3 L552.7 364.8 L557.2 363.3 L561.6 361.7 L565.9 360.1 L570.1 358.3 L574.3 356.5 L578.4 354.6 L582.5 352.6 L586.4 350.5Z" fill="#b6926d"/>
<path d="M480.5 352.5 L475.7 352.5 L471.0 352.3 L466.4 352.0 L461.9 351.6 L467.4 375.0 L471.9 375.4 L476.5 375.7 L481.2 375.9 L486.0 375.9Z" fill="#92926d"/>
<path d="M595.5 318.5 L591.6 320.9 L587.7 323.3 L583.6 325.7 L579.5 327.9 L585.0 351.3 L589.1 349.1 L593.2 346.7 L597.1 344.3 L601.0 341.9Z" fill="#92926d"/>
<path d="M463.5 351.8 L459.4 351.4 L455.4 350.8 L451.5 350.2 L447.6 349.5 L443.8 348.7 L440.2 347.8 L436.6 346.8 L442.1 370.2 L445.7 371.2 L449.3 372.1 L453.1 372.9 L457.0 373.6 L460.9 374.2 L464.9 374.8 L469.0 375.2Z" fill="#92924a"/>
<path d="M615.6 302.3 L612.9 304.9 L610.1 307.4 L607.1 309.9 L604.1 312.3 L600.9 314.7 L597.6 317.0 L594.1 319.3 L599.6 342.7 L603.1 340.4 L606.4 338.1 L609.6 335.7 L612.6 333.3 L615.6 330.8 L618.4 328.3 L621.1 325.7Z" fill="#92924a"/>
<path d="M438.0 347.2 L433.9 346.0 L430.1 344.6 L426.3 343.2 L431.8 366.6 L435.6 368.0 L439.4 369.4 L443.5 370.6Z" fill="#926d49"/>
<path d="M623.0 294.3 L620.4 297.4 L617.6 300.4 L614.6 303.3 L620.1 326.7 L623.1 323.8 L625.9 320.8 L628.5 317.7Z" fill="#926d49"/>
<path d="M427.6 343.7 L424.5 342.4 L421.5 341.0 L418.6 339.6 L424.1 363.0 L427.0 364.4 L430.0 365.8 L433.1 367.1Z" fill="#6d6d49"/>
<path d="M628.2 287.5 L626.4 290.1 L624.3 292.8 L622.2 295.4 L627.7 318.8 L629.8 316.2 L631.9 313.5 L633.7 310.9Z" fill="#6d6d49"/>
<path d="M419.7 340.1 L416.8 338.6 L414.1 337.0 L411.6 335.4 L409.1 333.6 L406.8 331.8 L412.3 355.2 L414.6 357.0 L417.1 358.8 L419.6 360.4 L422.3 362.0 L425.2 363.5Z" fill="#6d6d24"/>
<path d="M635.1 275.1 L633.8 277.8 L632.5 280.5 L631.0 283.2 L629.3 285.8 L627.5 288.5 L633.0 311.9 L634.8 309.2 L636.5 306.6 L638.0 303.9 L639.3 301.2 L640.6 298.5Z" fill="#6d6d24"/>
<path d="M407.7 332.5 L404.5 329.9 L401.7 327.1 L407.2 350.5 L410.0 353.3 L413.2 355.9Z" fill="#7a4a26"/>
<path d="M637.4 268.5 L636.1 272.3 L634.6 276.2 L640.1 299.6 L641.6 295.7 L642.9 291.9Z" fill="#7a4a26"/>
<path d="M402.5 327.9 L400.5 325.7 L398.7 323.6 L397.0 321.3 L395.5 319.0 L394.2 316.7 L393.0 314.3 L392.1 311.8 L391.2 309.3 L390.6 306.7 L396.1 330.1 L396.7 332.7 L397.6 335.2 L398.5 337.7 L399.7 340.1 L401.0 342.4 L402.5 344.7 L404.2 347.0 L406.0 349.1 L408.0 351.3Z" fill="#6d6d24"/>
<path d="M638.0 246.1 L638.5 248.6 L638.9 251.1 L639.1 253.7 L639.2 256.3 L639.1 258.9 L638.8 261.5 L638.4 264.2 L637.8 266.9 L637.1 269.6 L642.6 293.0 L643.3 290.3 L643.9 287.6 L644.3 284.9 L644.6 282.3 L644.7 279.7 L644.6 277.1 L644.4 274.5 L644.0 272.0 L643.5 269.5Z" fill="#6d6d24"/>
<path d="M616.4 301.6 L621.9 325.0" stroke="#2a2a0c" stroke-width="0.9" fill="none"/>
<path d="M643.6 270.0 L644.1 272.4 L644.5 274.9 L644.6 277.4 L644.7 279.9 L644.6 282.5 L644.3 285.0 L643.9 287.6 L643.3 290.2 L642.6 292.9 L641.7 295.5 L640.7 298.1 L639.5 300.8 L638.2 303.4 L636.8 306.0 L635.2 308.7 L633.4 311.3 L631.6 313.9 L629.6 316.5 L627.4 319.1 L625.1 321.6 L622.7 324.1 L620.2 326.6 L617.6 329.1 L614.8 331.5 L611.9 333.9 L608.9 336.2 L605.8 338.5 L602.6 340.8 L599.3 343.0 L595.9 345.1 L592.4 347.2 L588.8 349.3 L585.1 351.2 L581.3 353.2 L577.5 355.0 L573.6 356.8 L569.7 358.5 L565.6 360.2 L561.5 361.7 L557.4 363.2 L553.2 364.7 L549.0 366.0 L544.8 367.3 L540.5 368.5 L536.2 369.6 L531.9 370.6 L527.5 371.5 L523.2 372.4 L518.8 373.1 L514.4 373.8 L510.1 374.4 L505.8 374.8 L501.4 375.2 L497.2 375.5 L492.9 375.8 L488.6 375.9 L484.5 375.9 L480.3 375.8 L476.2 375.7 L472.1 375.4 L468.1 375.1 L464.2 374.7 L460.4 374.2 L456.6 373.6 L452.8 372.9 L449.2 372.1 L445.7 371.2 L442.2 370.2 L438.9 369.2 L435.6 368.1 L432.4 366.8 L429.4 365.5 L426.4 364.2 L423.6 362.7 L420.9 361.2 L418.3 359.6 L415.8 357.9 L413.5 356.2 L411.3 354.4 L409.2 352.5 L407.3 350.5 L405.5 348.5 L403.8 346.5 L402.3 344.4 L400.9 342.2 L399.7 340.0 L398.6 337.7 L397.6 335.4 L396.8 333.0 L396.2 330.6" fill="none" stroke="#7e7e3c" stroke-width="1.7"/>
<path d="M643.6 270.0 L644.1 272.4 L644.5 274.9 L644.6 277.4 L644.7 279.9 L644.6 282.5 L644.3 285.0 L643.9 287.6 L643.3 290.2 L642.6 292.9 L641.7 295.5 L640.7 298.1 L639.5 300.8 L638.2 303.4 L636.8 306.0 L635.2 308.7 L633.4 311.3 L631.6 313.9 L629.6 316.5 L627.4 319.1 L625.1 321.6 L622.7 324.1 L620.2 326.6 L617.6 329.1 L614.8 331.5 L611.9 333.9 L608.9 336.2 L605.8 338.5 L602.6 340.8 L599.3 343.0 L595.9 345.1 L592.4 347.2 L588.8 349.3 L585.1 351.2 L581.3 353.2 L577.5 355.0 L573.6 356.8 L569.7 358.5 L565.6 360.2 L561.5 361.7 L557.4 363.2 L553.2 364.7 L549.0 366.0 L544.8 367.3 L540.5 368.5 L536.2 369.6 L531.9 370.6 L527.5 371.5 L523.2 372.4 L518.8 373.1 L514.4 373.8 L510.1 374.4 L505.8 374.8 L501.4 375.2 L497.2 375.5 L492.9 375.8 L488.6 375.9 L484.5 375.9 L480.3 375.8 L476.2 375.7 L472.1 375.4 L468.1 375.1 L464.2 374.7 L460.4 374.2 L456.6 373.6 L452.8 372.9 L449.2 372.1 L445.7 371.2 L442.2 370.2 L438.9 369.2 L435.6 368.1 L432.4 366.8 L429.4 365.5 L426.4 364.2 L423.6 362.7 L420.9 361.2 L418.3 359.6 L415.8 357.9 L413.5 356.2 L411.3 354.4 L409.2 352.5 L407.3 350.5 L405.5 348.5 L403.8 346.5 L402.3 344.4 L400.9 342.2 L399.7 340.0 L398.6 337.7 L397.6 335.4 L396.8 333.0 L396.2 330.6" fill="none" stroke="#2a2a0c" stroke-width="0.9"/>
<path d="M638.1 246.6 L643.6 270.0" fill="none" stroke="#2a2a0c" stroke-width="0.9"/>
<path d="M390.7 307.2 L396.2 330.6" fill="none" stroke="#2a2a0c" stroke-width="0.9"/>
<path d="M616.4 301.6 L613.8 304.0 L611.1 306.5 L608.3 308.9 L605.4 311.3 L602.4 313.6 L599.2 315.9 L596.0 318.1 L592.6 320.3 L589.2 322.4 L585.7 324.5 L582.0 326.5 L578.3 328.5 L574.6 330.4 L570.7 332.2 L566.8 334.0 L562.8 335.7 L558.8 337.3 L554.7 338.9 L550.5 340.3 L546.3 341.7 L542.1 343.1 L537.8 344.3 L533.5 345.4 L529.2 346.5 L524.9 347.5 L520.5 348.4 L516.2 349.2 L511.8 349.9 L507.5 350.6 L503.1 351.1 L498.8 351.6 L494.5 352.0 L490.2 352.2 L485.9 352.4 L481.7 352.5 L477.5 352.5 L473.4 352.4 L469.3 352.2 L465.3 351.9 L461.3 351.6 L457.4 351.1 L453.6 350.6 L449.8 349.9 L446.1 349.2 L442.5 348.4 L439.0 347.5 L435.6 346.5 L432.2 345.4 L429.0 344.3 L425.9 343.0 L422.9 341.7 L420.0 340.3 L417.2 338.8 L414.5 337.3 L412.0 335.6 L409.5 333.9 L407.2 332.2 L405.1 330.3 L403.0 328.4 L401.1 326.5 L399.4 324.4 L397.8 322.4 L396.3 320.2 L395.0 318.0 L393.8 315.8 L392.7 313.5 L391.8 311.2 L391.1 308.8 L390.5 306.4 L390.1 304.0 L389.8 301.5 L389.6 299.0 L389.6 296.4 L389.8 293.9 L390.1 291.3 L390.6 288.7 L391.2 286.1 L392.0 283.4 L392.9 280.8 L394.0 278.2 L395.2 275.5 L396.5 272.9 L398.0 270.3 L399.7 267.6 L401.5 265.0 L403.4 262.4 L405.5 259.8 L407.6 257.3 L410.0 254.7 L412.4 252.2 L415.0 249.8 L417.7 247.3 L420.5 244.9 L423.4 242.5 L426.4 240.2 L429.6 237.9 L432.8 235.7 L436.2 233.5 L439.6 231.4 L443.1 229.3 L446.8 227.3 L450.5 225.3 L454.2 223.4 L458.1 221.6 L462.0 219.8 L466.0 218.1 L470.0 216.5 L474.1 214.9 L478.3 213.5 L482.5 212.1 L486.7 210.7 L491.0 209.5 L495.3 208.4 L499.6 207.3 L503.9 206.3 L508.3 205.4 L512.6 204.6 L517.0 203.9 L521.3 203.2 L525.7 202.7 L530.0 202.2 L534.3 201.8 L538.6 201.6 L542.9 201.4 L547.1 201.3 L551.3 201.3 L555.4 201.4 L559.5 201.6 L563.5 201.9 L567.5 202.2 L571.4 202.7 L575.2 203.2 L579.0 203.9 L582.7 204.6 L586.3 205.4 L589.8 206.3 L593.2 207.3 L596.6 208.4 L599.8 209.5 L602.9 210.8 L605.9 212.1 L608.8 213.5 L611.6 215.0 L614.3 216.5 L616.8 218.2 L619.3 219.9 L621.6 221.6 L623.7 223.5 L625.8 225.4 L627.7 227.3 L629.4 229.4 L631.0 231.4 L632.5 233.6 L633.8 235.8 L635.0 238.0 L636.1 240.3 L637.0 242.6 L637.7 245.0 L638.3 247.4 L638.7 249.8 L639.0 252.3 L639.2 254.8 L639.2 257.4 L639.0 259.9 L638.7 262.5 L638.2 265.1 L637.6 267.7 L636.8 270.4 L635.9 273.0 L634.8 275.6 L633.6 278.3 L632.3 280.9 L630.8 283.5 L629.1 286.2 L627.3 288.8 L625.4 291.4 L623.3 294.0 L621.2 296.5 L618.8 299.1 L616.4 301.6Z" fill="#926d49"/>
<path d="M616.4 301.6 L613.8 304.0 L611.1 306.5 L608.3 308.9 L605.4 311.3 L602.4 313.6 L599.2 315.9 L596.0 318.1 L592.6 320.3 L589.2 322.4 L585.7 324.5 L582.0 326.5 L578.3 328.5 L574.6 330.4 L570.7 332.2 L566.8 334.0 L562.8 335.7 L558.8 337.3 L554.7 338.9 L550.5 340.3 L546.3 341.7 L542.1 343.1 L537.8 344.3 L533.5 345.4 L529.2 346.5 L524.9 347.5 L520.5 348.4 L516.2 349.2 L511.8 349.9 L507.5 350.6 L503.1 351.1 L498.8 351.6 L494.5 352.0 L490.2 352.2 L485.9 352.4 L481.7 352.5 L477.5 352.5 L473.4 352.4 L469.3 352.2 L465.3 351.9 L461.3 351.6 L457.4 351.1 L453.6 350.6 L449.8 349.9 L446.1 349.2 L442.5 348.4 L439.0 347.5 L435.6 346.5 L432.2 345.4 L429.0 344.3 L425.9 343.0 L422.9 341.7 L420.0 340.3 L417.2 338.8 L414.5 337.3 L412.0 335.6 L409.5 333.9 L407.2 332.2 L405.1 330.3 L403.0 328.4 L401.1 326.5 L399.4 324.4 L397.8 322.4 L396.3 320.2 L395.0 318.0 L393.8 315.8 L392.7 313.5 L391.8 311.2 L391.1 308.8 L390.5 306.4 L390.1 304.0 L389.8 301.5 L389.6 299.0 L389.6 296.4 L389.8 293.9 L390.1 291.3 L390.6 288.7 L391.2 286.1 L392.0 283.4 L392.9 280.8 L394.0 278.2 L395.2 275.5 L396.5 272.9 L398.0 270.3 L399.7 267.6 L401.5 265.0 L403.4 262.4 L405.5 259.8 L407.6 257.3 L410.0 254.7 L412.4 252.2 L415.0 249.8 L417.7 247.3 L420.5 244.9 L423.4 242.5 L426.4 240.2 L429.6 237.9 L432.8 235.7 L436.2 233.5 L439.6 231.4 L443.1 229.3 L446.8 227.3 L450.5 225.3 L454.2 223.4 L458.1 221.6 L462.0 219.8 L466.0 218.1 L470.0 216.5 L474.1 214.9 L478.3 213.5 L482.5 212.1 L486.7 210.7 L491.0 209.5 L495.3 208.4 L499.6 207.3 L503.9 206.3 L508.3 205.4 L512.6 204.6 L517.0 203.9 L521.3 203.2 L525.7 202.7 L530.0 202.2 L534.3 201.8 L538.6 201.6 L542.9 201.4 L547.1 201.3 L551.3 201.3 L555.4 201.4 L559.5 201.6 L563.5 201.9 L567.5 202.2 L571.4 202.7 L575.2 203.2 L579.0 203.9 L582.7 204.6 L586.3 205.4 L589.8 206.3 L593.2 207.3 L596.6 208.4 L599.8 209.5 L602.9 210.8 L605.9 212.1 L608.8 213.5 L611.6 215.0 L614.3 216.5 L616.8 218.2 L619.3 219.9 L621.6 221.6 L623.7 223.5 L625.8 225.4 L627.7 227.3 L629.4 229.4 L631.0 231.4 L632.5 233.6 L633.8 235.8 L635.0 238.0 L636.1 240.3 L637.0 242.6 L637.7 245.0 L638.3 247.4 L638.7 249.8 L639.0 252.3 L639.2 254.8 L639.2 257.4 L639.0 259.9 L638.7 262.5 L638.2 265.1 L637.6 267.7 L636.8 270.4 L635.9 273.0 L634.8 275.6 L633.6 278.3 L632.3 280.9 L630.8 283.5 L629.1 286.2 L627.3 288.8 L625.4 291.4 L623.3 294.0 L621.2 296.5 L618.8 299.1 L616.4 301.6Z" fill="none" stroke="#7e7e3c" stroke-width="1.8"/>
<path d="M616.4 301.6 L613.8 304.0 L611.1 306.5 L608.3 308.9 L605.4 311.3 L602.4 313.6 L599.2 315.9 L596.0 318.1 L592.6 320.3 L589.2 322.4 L585.7 324.5 L582.0 326.5 L578.3 328.5 L574.6 330.4 L570.7 332.2 L566.8 334.0 L562.8 335.7 L558.8 337.3 L554.7 338.9 L550.5 340.3 L546.3 341.7 L542.1 343.1 L537.8 344.3 L533.5 345.4 L529.2 346.5 L524.9 347.5 L520.5 348.4 L516.2 349.2 L511.8 349.9 L507.5 350.6 L503.1 351.1 L498.8 351.6 L494.5 352.0 L490.2 352.2 L485.9 352.4 L481.7 352.5 L477.5 352.5 L473.4 352.4 L469.3 352.2 L465.3 351.9 L461.3 351.6 L457.4 351.1 L453.6 350.6 L449.8 349.9 L446.1 349.2 L442.5 348.4 L439.0 347.5 L435.6 346.5 L432.2 345.4 L429.0 344.3 L425.9 343.0 L422.9 341.7 L420.0 340.3 L417.2 338.8 L414.5 337.3 L412.0 335.6 L409.5 333.9 L407.2 332.2 L405.1 330.3 L403.0 328.4 L401.1 326.5 L399.4 324.4 L397.8 322.4 L396.3 320.2 L395.0 318.0 L393.8 315.8 L392.7 313.5 L391.8 311.2 L391.1 308.8 L390.5 306.4 L390.1 304.0 L389.8 301.5 L389.6 299.0 L389.6 296.4 L389.8 293.9 L390.1 291.3 L390.6 288.7 L391.2 286.1 L392.0 283.4 L392.9 280.8 L394.0 278.2 L395.2 275.5 L396.5 272.9 L398.0 270.3 L399.7 267.6 L401.5 265.0 L403.4 262.4 L405.5 259.8 L407.6 257.3 L410.0 254.7 L412.4 252.2 L415.0 249.8 L417.7 247.3 L420.5 244.9 L423.4 242.5 L426.4 240.2 L429.6 237.9 L432.8 235.7 L436.2 233.5 L439.6 231.4 L443.1 229.3 L446.8 227.3 L450.5 225.3 L454.2 223.4 L458.1 221.6 L462.0 219.8 L466.0 218.1 L470.0 216.5 L474.1 214.9 L478.3 213.5 L482.5 212.1 L486.7 210.7 L491.0 209.5 L495.3 208.4 L499.6 207.3 L503.9 206.3 L508.3 205.4 L512.6 204.6 L517.0 203.9 L521.3 203.2 L525.7 202.7 L530.0 202.2 L534.3 201.8 L538.6 201.6 L542.9 201.4 L547.1 201.3 L551.3 201.3 L555.4 201.4 L559.5 201.6 L563.5 201.9 L567.5 202.2 L571.4 202.7 L575.2 203.2 L579.0 203.9 L582.7 204.6 L586.3 205.4 L589.8 206.3 L593.2 207.3 L596.6 208.4 L599.8 209.5 L602.9 210.8 L605.9 212.1 L608.8 213.5 L611.6 215.0 L614.3 216.5 L616.8 218.2 L619.3 219.9 L621.6 221.6 L623.7 223.5 L625.8 225.4 L627.7 227.3 L629.4 229.4 L631.0 231.4 L632.5 233.6 L633.8 235.8 L635.0 238.0 L636.1 240.3 L637.0 242.6 L637.7 245.0 L638.3 247.4 L638.7 249.8 L639.0 252.3 L639.2 254.8 L639.2 257.4 L639.0 259.9 L638.7 262.5 L638.2 265.1 L637.6 267.7 L636.8 270.4 L635.9 273.0 L634.8 275.6 L633.6 278.3 L632.3 280.9 L630.8 283.5 L629.1 286.2 L627.3 288.8 L625.4 291.4 L623.3 294.0 L621.2 296.5 L618.8 299.1 L616.4 301.6Z" fill="none" stroke="#2a2a0c" stroke-width="1.0"/>
<g clip-path="url(#ca1)">
<path d="M595.9 296.3 L593.8 298.3 L591.7 300.2 L589.5 302.1 L587.1 304.0 L584.7 305.9 L582.2 307.7 L579.6 309.5 L576.9 311.2 L574.2 312.9 L571.4 314.6 L568.5 316.2 L565.5 317.8 L562.5 319.3 L559.4 320.8 L556.3 322.2 L553.1 323.5 L549.9 324.8 L546.6 326.1 L543.3 327.2 L540.0 328.3 L536.6 329.4 L533.2 330.4 L529.8 331.3 L526.3 332.2 L522.9 333.0 L519.4 333.7 L515.9 334.3 L512.4 334.9 L509.0 335.4 L505.5 335.8 L502.1 336.2 L498.6 336.5 L495.2 336.7 L491.8 336.9 L488.4 336.9 L485.1 336.9 L481.8 336.9 L478.5 336.7 L475.3 336.5 L472.1 336.2 L469.0 335.8 L465.9 335.4 L462.9 334.9 L460.0 334.3 L457.1 333.6 L454.3 332.9 L451.6 332.1 L448.9 331.3 L446.4 330.4 L443.9 329.4 L441.5 328.3 L439.1 327.2 L436.9 326.0 L434.8 324.8 L432.7 323.5 L430.8 322.1 L429.0 320.7 L427.2 319.2 L425.6 317.7 L424.1 316.2 L422.7 314.5 L421.4 312.9 L420.2 311.2 L419.2 309.4 L418.2 307.6 L417.4 305.8 L416.7 304.0 L416.1 302.1 L415.6 300.1 L415.3 298.2 L415.0 296.2 L414.9 294.2 L414.9 292.2 L415.1 290.1 L415.3 288.1 L415.7 286.0 L416.2 283.9 L416.8 281.8 L417.5 279.7 L418.4 277.6 L419.4 275.5 L420.4 273.4 L421.6 271.3 L423.0 269.2 L424.4 267.1 L425.9 265.0 L427.5 263.0 L429.3 260.9 L431.1 258.9 L433.1 256.9 L435.2 254.9 L437.3 253.0 L439.5 251.1 L441.9 249.2 L444.3 247.3 L446.8 245.5 L449.4 243.7 L452.1 242.0 L454.8 240.3 L457.6 238.6 L460.5 237.0 L463.5 235.4 L466.5 233.9 L469.6 232.4 L472.7 231.0 L475.9 229.7 L479.1 228.4 L482.4 227.1 L485.7 226.0 L489.0 224.9 L492.4 223.8 L495.8 222.8 L499.2 221.9 L502.7 221.0 L506.1 220.2 L509.6 219.5 L513.1 218.9 L516.6 218.3 L520.0 217.8 L523.5 217.4 L526.9 217.0 L530.4 216.7 L533.8 216.5 L537.2 216.3 L540.6 216.3 L543.9 216.3 L547.2 216.3 L550.5 216.5 L553.7 216.7 L556.9 217.0 L560.0 217.4 L563.1 217.8 L566.1 218.3 L569.0 218.9 L571.9 219.6 L574.7 220.3 L577.4 221.1 L580.1 221.9 L582.6 222.8 L585.1 223.8 L587.5 224.9 L589.9 226.0 L592.1 227.2 L594.2 228.4 L596.3 229.7 L598.2 231.1 L600.0 232.5 L601.8 234.0 L603.4 235.5 L604.9 237.0 L606.3 238.7 L607.6 240.3 L608.8 242.0 L609.8 243.8 L610.8 245.6 L611.6 247.4 L612.3 249.2 L612.9 251.1 L613.4 253.1 L613.7 255.0 L614.0 257.0 L614.1 259.0 L614.1 261.0 L613.9 263.1 L613.7 265.1 L613.3 267.2 L612.8 269.3 L612.2 271.4 L611.5 273.5 L610.6 275.6 L609.6 277.7 L608.6 279.8 L607.4 281.9 L606.0 284.0 L604.6 286.1 L603.1 288.2 L601.5 290.2 L599.7 292.3 L597.9 294.3 L595.9 296.3Z" fill="#b6926d"/>
<path d="M499.1 221.9 L502.8 221.0 L506.7 220.1 L507.8 225.8 L504.0 226.6 L500.2 227.6Z" fill="#b6b66d"/>
<path d="M492.9 223.6 L496.7 222.6 L500.4 221.6 L501.6 227.2 L497.8 228.2 L494.1 229.3Z" fill="#b6b66d"/>
<path d="M505.3 220.4 L508.9 219.7 L512.6 219.0 L516.3 218.3 L520.0 217.8 L523.7 217.3 L527.3 217.0 L531.0 216.7 L534.6 216.4 L538.2 216.3 L541.8 216.3 L542.7 221.9 L539.2 222.0 L535.6 222.1 L532.0 222.3 L528.4 222.6 L524.7 223.0 L521.1 223.5 L517.4 224.0 L513.7 224.6 L510.1 225.3 L506.4 226.1Z" fill="#b6926d"/>
<path d="M460.4 237.1 L463.5 235.4 L466.7 233.8 L470.0 232.3 L473.3 230.8 L476.7 229.3 L480.1 228.0 L483.6 226.7 L487.1 225.5 L490.7 224.3 L494.3 223.3 L495.5 228.9 L491.9 230.0 L488.3 231.1 L484.8 232.3 L481.4 233.6 L477.9 235.0 L474.6 236.4 L471.3 237.9 L468.0 239.4 L464.8 241.0 L461.7 242.6Z" fill="#b6926d"/>
<path d="M540.4 216.3 L544.2 216.3 L548.0 216.4 L551.7 216.6 L555.3 216.8 L556.2 222.5 L552.6 222.2 L548.9 222.0 L545.2 221.9 L541.4 221.9Z" fill="#92926d"/>
<path d="M448.9 244.1 L451.9 242.1 L455.0 240.1 L458.2 238.2 L461.5 236.4 L462.9 242.0 L459.6 243.8 L456.4 245.7 L453.3 247.6 L450.3 249.6Z" fill="#92926d"/>
<path d="M554.0 216.7 L557.3 217.0 L560.5 217.4 L563.7 217.9 L566.8 218.5 L569.8 219.1 L572.8 219.8 L575.6 220.5 L576.5 226.2 L573.6 225.4 L570.7 224.7 L567.6 224.1 L564.6 223.6 L561.4 223.1 L558.2 222.7 L554.9 222.4Z" fill="#92924a"/>
<path d="M433.0 257.0 L435.1 255.0 L437.3 252.9 L439.7 251.0 L442.1 249.0 L444.6 247.1 L447.2 245.2 L449.9 243.3 L451.3 248.9 L448.6 250.7 L446.0 252.6 L443.5 254.5 L441.1 256.5 L438.8 258.5 L436.6 260.5 L434.5 262.5Z" fill="#92924a"/>
<path d="M574.5 220.2 L577.8 221.2 L580.9 222.2 L583.9 223.3 L584.7 229.0 L581.7 227.9 L578.6 226.8 L575.4 225.9Z" fill="#926d49"/>
<path d="M427.2 263.4 L429.3 261.0 L431.5 258.6 L433.8 256.2 L435.3 261.7 L432.9 264.1 L430.8 266.4 L428.7 268.9Z" fill="#926d49"/>
<path d="M582.9 222.9 L585.4 224.0 L587.9 225.0 L590.2 226.2 L591.0 231.8 L588.6 230.7 L586.2 229.6 L583.7 228.6Z" fill="#6d6d49"/>
<path d="M423.2 268.9 L424.6 266.8 L426.2 264.7 L427.9 262.6 L429.4 268.0 L427.7 270.1 L426.1 272.2 L424.7 274.3Z" fill="#6d6d49"/>
<path d="M589.3 225.7 L591.6 226.9 L593.8 228.2 L595.9 229.5 L597.9 230.8 L599.8 232.3 L600.5 237.9 L598.6 236.5 L596.6 235.1 L594.5 233.8 L592.3 232.5 L590.1 231.4Z" fill="#6d6d24"/>
<path d="M417.9 278.8 L418.8 276.6 L419.9 274.5 L421.0 272.3 L422.3 270.2 L423.7 268.1 L425.2 273.5 L423.8 275.6 L422.6 277.8 L421.4 279.9 L420.4 282.0 L419.4 284.2Z" fill="#6d6d24"/>
<path d="M599.0 231.7 L601.6 233.8 L603.9 236.0 L604.6 241.6 L602.3 239.4 L599.8 237.3Z" fill="#7a4a26"/>
<path d="M416.2 284.0 L417.1 281.0 L418.3 277.9 L419.8 283.3 L418.6 286.4 L417.7 289.4Z" fill="#7a4a26"/>
<path d="M603.3 235.4 L605.0 237.1 L606.5 238.9 L607.9 240.7 L609.2 242.6 L610.3 244.6 L611.3 246.6 L612.1 248.6 L612.8 250.7 L613.3 252.8 L614.0 258.3 L613.4 256.2 L612.8 254.1 L611.9 252.1 L610.9 250.1 L609.8 248.2 L608.6 246.3 L607.2 244.5 L605.7 242.7 L604.0 241.0Z" fill="#6d6d24"/>
<path d="M415.9 301.2 L415.4 299.0 L415.1 296.8 L414.9 294.6 L414.9 292.4 L415.1 290.1 L415.4 287.8 L415.8 285.5 L416.4 283.2 L417.9 288.6 L417.3 290.9 L416.9 293.2 L416.6 295.4 L416.5 297.7 L416.5 299.9 L416.6 302.1 L416.9 304.3 L417.4 306.5Z" fill="#6d6d24"/>
<path d="M596.6 301.6 L594.6 303.6 L592.5 305.5 L590.2 307.4 L587.9 309.3 L585.5 311.2 L583.0 313.0 L580.4 314.8 L577.7 316.5 L575.0 318.2 L572.2 319.8 L569.3 321.4 L566.4 323.0 L563.4 324.5 L560.3 326.0 L557.2 327.4 L554.0 328.7 L550.8 330.0 L547.6 331.2 L544.3 332.4 L541.0 333.5 L537.6 334.6 L534.2 335.5 L530.8 336.5 L527.4 337.3 L523.9 338.1 L520.5 338.8 L517.0 339.5 L513.6 340.0 L510.1 340.5 L506.6 341.0 L503.2 341.3 L499.8 341.6 L496.4 341.8 L493.0 342.0 L489.6 342.1 L486.3 342.1 L483.0 342.0 L479.8 341.8 L476.6 341.6 L473.4 341.3 L470.3 341.0 L467.3 340.5 L464.3 340.0 L461.3 339.4 L458.5 338.8 L455.7 338.1 L453.0 337.3 L450.3 336.4 L447.8 335.5 L445.3 334.5 L442.9 333.5 L440.6 332.4 L438.4 331.2 L436.2 330.0 L434.2 328.7 L432.3 327.3 L430.5 325.9 L428.7 324.5 L427.1 322.9 L425.6 321.4 L424.2 319.8 L422.9 318.1 L421.8 316.4 L420.7 314.7 L419.8 312.9 L418.9 311.1 L418.2 309.2 L417.6 307.4 L417.2 305.4 L416.8 303.5 L416.6 301.5 L416.5 299.5 L416.5 297.5 L416.6 295.5 L416.9 293.4 L417.2 291.4 L417.7 289.3 L418.3 287.2 L419.1 285.1 L419.9 283.0 L420.9 280.9 L422.0 278.8 L423.2 276.7 L424.5 274.6 L425.9 272.6 L427.4 270.5 L429.0 268.4 L430.8 266.4 L432.6 264.4 L434.6 262.4 L436.6 260.4 L438.7 258.5 L441.0 256.6 L443.3 254.7 L445.7 252.8 L448.2 251.0 L450.8 249.2 L453.5 247.5 L456.2 245.8 L459.0 244.2 L461.9 242.6 L464.8 241.0 L467.8 239.5 L470.9 238.0 L474.0 236.6 L477.2 235.3 L480.4 234.0 L483.6 232.8 L486.9 231.6 L490.2 230.5 L493.6 229.4 L497.0 228.5 L500.4 227.5 L503.8 226.7 L507.3 225.9 L510.7 225.2 L514.2 224.5 L517.6 224.0 L521.1 223.5 L524.6 223.0 L528.0 222.7 L531.4 222.4 L534.8 222.2 L538.2 222.0 L541.6 221.9 L544.9 221.9 L548.2 222.0 L551.4 222.2 L554.6 222.4 L557.8 222.7 L560.9 223.0 L563.9 223.5 L566.9 224.0 L569.9 224.6 L572.7 225.2 L575.5 225.9 L578.2 226.7 L580.9 227.6 L583.4 228.5 L585.9 229.5 L588.3 230.5 L590.6 231.6 L592.8 232.8 L595.0 234.0 L597.0 235.3 L598.9 236.7 L600.7 238.1 L602.5 239.5 L604.1 241.1 L605.6 242.6 L607.0 244.2 L608.3 245.9 L609.4 247.6 L610.5 249.3 L611.4 251.1 L612.3 252.9 L613.0 254.8 L613.6 256.6 L614.0 258.6 L614.4 260.5 L614.6 262.5 L614.7 264.5 L614.7 266.5 L614.6 268.5 L614.3 270.6 L614.0 272.6 L613.5 274.7 L612.9 276.8 L612.1 278.9 L611.3 281.0 L610.3 283.1 L609.2 285.2 L608.0 287.3 L606.7 289.4 L605.3 291.4 L603.8 293.5 L602.2 295.6 L600.4 297.6 L598.6 299.6 L596.6 301.6Z" fill="#926d49"/>
<path d="M596.6 301.6 L594.6 303.6 L592.5 305.5 L590.2 307.4 L587.9 309.3 L585.5 311.2 L583.0 313.0 L580.4 314.8 L577.7 316.5 L575.0 318.2 L572.2 319.8 L569.3 321.4 L566.4 323.0 L563.4 324.5 L560.3 326.0 L557.2 327.4 L554.0 328.7 L550.8 330.0 L547.6 331.2 L544.3 332.4 L541.0 333.5 L537.6 334.6 L534.2 335.5 L530.8 336.5 L527.4 337.3 L523.9 338.1 L520.5 338.8 L517.0 339.5 L513.6 340.0 L510.1 340.5 L506.6 341.0 L503.2 341.3 L499.8 341.6 L496.4 341.8 L493.0 342.0 L489.6 342.1 L486.3 342.1 L483.0 342.0 L479.8 341.8 L476.6 341.6 L473.4 341.3 L470.3 341.0 L467.3 340.5 L464.3 340.0 L461.3 339.4 L458.5 338.8 L455.7 338.1 L453.0 337.3 L450.3 336.4 L447.8 335.5 L445.3 334.5 L442.9 333.5 L440.6 332.4 L438.4 331.2 L436.2 330.0 L434.2 328.7 L432.3 327.3 L430.5 325.9 L428.7 324.5 L427.1 322.9 L425.6 321.4 L424.2 319.8 L422.9 318.1 L421.8 316.4 L420.7 314.7 L419.8 312.9 L418.9 311.1 L418.2 309.2 L417.6 307.4 L417.2 305.4 L416.8 303.5 L416.6 301.5 L416.5 299.5 L416.5 297.5 L416.6 295.5 L416.9 293.4 L417.2 291.4 L417.7 289.3 L418.3 287.2 L419.1 285.1 L419.9 283.0 L420.9 280.9 L422.0 278.8 L423.2 276.7 L424.5 274.6 L425.9 272.6 L427.4 270.5 L429.0 268.4 L430.8 266.4 L432.6 264.4 L434.6 262.4 L436.6 260.4 L438.7 258.5 L441.0 256.6 L443.3 254.7 L445.7 252.8 L448.2 251.0 L450.8 249.2 L453.5 247.5 L456.2 245.8 L459.0 244.2 L461.9 242.6 L464.8 241.0 L467.8 239.5 L470.9 238.0 L474.0 236.6 L477.2 235.3 L480.4 234.0 L483.6 232.8 L486.9 231.6 L490.2 230.5 L493.6 229.4 L497.0 228.5 L500.4 227.5 L503.8 226.7 L507.3 225.9 L510.7 225.2 L514.2 224.5 L517.6 224.0 L521.1 223.5 L524.6 223.0 L528.0 222.7 L531.4 222.4 L534.8 222.2 L538.2 222.0 L541.6 221.9 L544.9 221.9 L548.2 222.0 L551.4 222.2 L554.6 222.4 L557.8 222.7 L560.9 223.0 L563.9 223.5 L566.9 224.0 L569.9 224.6 L572.7 225.2 L575.5 225.9 L578.2 226.7 L580.9 227.6 L583.4 228.5 L585.9 229.5 L588.3 230.5 L590.6 231.6 L592.8 232.8 L595.0 234.0 L597.0 235.3 L598.9 236.7 L600.7 238.1 L602.5 239.5 L604.1 241.1 L605.6 242.6 L607.0 244.2 L608.3 245.9 L609.4 247.6 L610.5 249.3 L611.4 251.1 L612.3 252.9 L613.0 254.8 L613.6 256.6 L614.0 258.6 L614.4 260.5 L614.6 262.5 L614.7 264.5 L614.7 266.5 L614.6 268.5 L614.3 270.6 L614.0 272.6 L613.5 274.7 L612.9 276.8 L612.1 278.9 L611.3 281.0 L610.3 283.1 L609.2 285.2 L608.0 287.3 L606.7 289.4 L605.3 291.4 L603.8 293.5 L602.2 295.6 L600.4 297.6 L598.6 299.6 L596.6 301.6Z" fill="none" stroke="#7e7e3c" stroke-width="1.6"/>
<path d="M596.6 301.6 L594.6 303.6 L592.5 305.5 L590.2 307.4 L587.9 309.3 L585.5 311.2 L583.0 313.0 L580.4 314.8 L577.7 316.5 L575.0 318.2 L572.2 319.8 L569.3 321.4 L566.4 323.0 L563.4 324.5 L560.3 326.0 L557.2 327.4 L554.0 328.7 L550.8 330.0 L547.6 331.2 L544.3 332.4 L541.0 333.5 L537.6 334.6 L534.2 335.5 L530.8 336.5 L527.4 337.3 L523.9 338.1 L520.5 338.8 L517.0 339.5 L513.6 340.0 L510.1 340.5 L506.6 341.0 L503.2 341.3 L499.8 341.6 L496.4 341.8 L493.0 342.0 L489.6 342.1 L486.3 342.1 L483.0 342.0 L479.8 341.8 L476.6 341.6 L473.4 341.3 L470.3 341.0 L467.3 340.5 L464.3 340.0 L461.3 339.4 L458.5 338.8 L455.7 338.1 L453.0 337.3 L450.3 336.4 L447.8 335.5 L445.3 334.5 L442.9 333.5 L440.6 332.4 L438.4 331.2 L436.2 330.0 L434.2 328.7 L432.3 327.3 L430.5 325.9 L428.7 324.5 L427.1 322.9 L425.6 321.4 L424.2 319.8 L422.9 318.1 L421.8 316.4 L420.7 314.7 L419.8 312.9 L418.9 311.1 L418.2 309.2 L417.6 307.4 L417.2 305.4 L416.8 303.5 L416.6 301.5 L416.5 299.5 L416.5 297.5 L416.6 295.5 L416.9 293.4 L417.2 291.4 L417.7 289.3 L418.3 287.2 L419.1 285.1 L419.9 283.0 L420.9 280.9 L422.0 278.8 L423.2 276.7 L424.5 274.6 L425.9 272.6 L427.4 270.5 L429.0 268.4 L430.8 266.4 L432.6 264.4 L434.6 262.4 L436.6 260.4 L438.7 258.5 L441.0 256.6 L443.3 254.7 L445.7 252.8 L448.2 251.0 L450.8 249.2 L453.5 247.5 L456.2 245.8 L459.0 244.2 L461.9 242.6 L464.8 241.0 L467.8 239.5 L470.9 238.0 L474.0 236.6 L477.2 235.3 L480.4 234.0 L483.6 232.8 L486.9 231.6 L490.2 230.5 L493.6 229.4 L497.0 228.5 L500.4 227.5 L503.8 226.7 L507.3 225.9 L510.7 225.2 L514.2 224.5 L517.6 224.0 L521.1 223.5 L524.6 223.0 L528.0 222.7 L531.4 222.4 L534.8 222.2 L538.2 222.0 L541.6 221.9 L544.9 221.9 L548.2 222.0 L551.4 222.2 L554.6 222.4 L557.8 222.7 L560.9 223.0 L563.9 223.5 L566.9 224.0 L569.9 224.6 L572.7 225.2 L575.5 225.9 L578.2 226.7 L580.9 227.6 L583.4 228.5 L585.9 229.5 L588.3 230.5 L590.6 231.6 L592.8 232.8 L595.0 234.0 L597.0 235.3 L598.9 236.7 L600.7 238.1 L602.5 239.5 L604.1 241.1 L605.6 242.6 L607.0 244.2 L608.3 245.9 L609.4 247.6 L610.5 249.3 L611.4 251.1 L612.3 252.9 L613.0 254.8 L613.6 256.6 L614.0 258.6 L614.4 260.5 L614.6 262.5 L614.7 264.5 L614.7 266.5 L614.6 268.5 L614.3 270.6 L614.0 272.6 L613.5 274.7 L612.9 276.8 L612.1 278.9 L611.3 281.0 L610.3 283.1 L609.2 285.2 L608.0 287.3 L606.7 289.4 L605.3 291.4 L603.8 293.5 L602.2 295.6 L600.4 297.6 L598.6 299.6 L596.6 301.6Z" fill="none" stroke="#2a2a0c" stroke-width="0.8"/>
<g clip-path="url(#ca3)">
<path d="M592.2 301.1 L590.2 303.0 L588.2 304.8 L586.2 306.6 L584.0 308.4 L581.7 310.1 L579.4 311.8 L577.0 313.5 L574.5 315.1 L571.9 316.7 L569.3 318.2 L566.6 319.7 L563.9 321.2 L561.0 322.6 L558.2 324.0 L555.3 325.3 L552.3 326.5 L549.3 327.7 L546.2 328.9 L543.2 330.0 L540.0 331.0 L536.9 332.0 L533.7 332.9 L530.5 333.8 L527.3 334.6 L524.1 335.3 L520.9 336.0 L517.6 336.6 L514.4 337.1 L511.2 337.6 L507.9 338.0 L504.7 338.4 L501.5 338.6 L498.3 338.8 L495.1 339.0 L492.0 339.0 L488.9 339.0 L485.8 339.0 L482.8 338.8 L479.8 338.6 L476.8 338.3 L473.9 338.0 L471.0 337.6 L468.2 337.1 L465.5 336.6 L462.8 336.0 L460.2 335.3 L457.7 334.6 L455.2 333.8 L452.8 332.9 L450.5 332.0 L448.2 331.0 L446.1 329.9 L444.0 328.8 L442.0 327.7 L440.1 326.5 L438.3 325.2 L436.6 323.9 L435.0 322.5 L433.5 321.1 L432.1 319.7 L430.8 318.2 L429.5 316.6 L428.4 315.0 L427.5 313.4 L426.6 311.7 L425.8 310.0 L425.1 308.3 L424.6 306.5 L424.1 304.7 L423.8 302.9 L423.6 301.1 L423.5 299.2 L423.5 297.3 L423.6 295.4 L423.9 293.5 L424.2 291.6 L424.7 289.6 L425.2 287.7 L425.9 285.7 L426.7 283.7 L427.6 281.8 L428.6 279.8 L429.8 277.9 L431.0 275.9 L432.3 274.0 L433.7 272.0 L435.3 270.1 L436.9 268.2 L438.6 266.3 L440.4 264.5 L442.4 262.6 L444.4 260.8 L446.4 259.0 L448.6 257.2 L450.9 255.5 L453.2 253.8 L455.6 252.1 L458.1 250.5 L460.7 248.9 L463.3 247.4 L466.0 245.9 L468.7 244.4 L471.6 243.0 L474.4 241.6 L477.3 240.3 L480.3 239.1 L483.3 237.9 L486.4 236.7 L489.4 235.6 L492.6 234.6 L495.7 233.6 L498.9 232.7 L502.1 231.8 L505.3 231.0 L508.5 230.3 L511.7 229.6 L515.0 229.0 L518.2 228.5 L521.4 228.0 L524.7 227.6 L527.9 227.2 L531.1 227.0 L534.3 226.8 L537.5 226.6 L540.6 226.6 L543.7 226.6 L546.8 226.6 L549.8 226.8 L552.8 227.0 L555.8 227.3 L558.7 227.6 L561.6 228.0 L564.4 228.5 L567.1 229.0 L569.8 229.6 L572.4 230.3 L574.9 231.0 L577.4 231.8 L579.8 232.7 L582.1 233.6 L584.4 234.6 L586.5 235.7 L588.6 236.8 L590.6 237.9 L592.5 239.1 L594.3 240.4 L596.0 241.7 L597.6 243.1 L599.1 244.5 L600.5 245.9 L601.8 247.4 L603.1 249.0 L604.2 250.6 L605.1 252.2 L606.0 253.9 L606.8 255.6 L607.5 257.3 L608.0 259.1 L608.5 260.9 L608.8 262.7 L609.0 264.5 L609.1 266.4 L609.1 268.3 L609.0 270.2 L608.7 272.1 L608.4 274.0 L607.9 276.0 L607.4 277.9 L606.7 279.9 L605.9 281.9 L605.0 283.8 L604.0 285.8 L602.8 287.7 L601.6 289.7 L600.3 291.6 L598.9 293.6 L597.3 295.5 L595.7 297.4 L594.0 299.3 L592.2 301.1Z" fill="#b6926d"/>
<path d="M501.9 231.9 L505.4 231.0 L509.0 230.2 L511.9 248.9 L508.4 249.7 L504.9 250.6Z" fill="#b6b66d"/>
<path d="M496.2 233.5 L499.7 232.5 L503.2 231.5 L506.2 250.2 L502.7 251.1 L499.3 252.1Z" fill="#b6b66d"/>
<path d="M507.7 230.5 L511.1 229.7 L514.6 229.1 L518.0 228.5 L521.4 228.0 L524.8 227.6 L528.3 227.2 L531.7 226.9 L535.0 226.7 L538.4 226.6 L541.7 226.6 L544.1 245.3 L540.8 245.4 L537.5 245.5 L534.2 245.7 L530.9 246.0 L527.5 246.3 L524.1 246.8 L520.8 247.3 L517.4 247.8 L514.0 248.5 L510.6 249.2Z" fill="#b6926d"/>
<path d="M465.9 246.0 L468.8 244.4 L471.8 242.9 L474.8 241.5 L477.9 240.1 L481.1 238.8 L484.3 237.5 L487.5 236.3 L490.8 235.2 L494.1 234.1 L497.4 233.1 L500.5 251.8 L497.2 252.8 L494.0 253.8 L490.8 254.9 L487.6 256.1 L484.4 257.4 L481.3 258.7 L478.3 260.0 L475.3 261.4 L472.3 262.9 L469.5 264.4Z" fill="#b6926d"/>
<path d="M540.4 226.6 L544.0 226.6 L547.5 226.7 L550.9 226.8 L554.3 227.1 L556.5 245.9 L553.2 245.6 L549.8 245.4 L546.3 245.4 L542.9 245.4Z" fill="#92926d"/>
<path d="M455.1 252.5 L458.0 250.6 L460.9 248.8 L463.9 247.1 L467.0 245.4 L470.5 263.9 L467.5 265.5 L464.5 267.2 L461.7 269.0 L458.9 270.8Z" fill="#92926d"/>
<path d="M553.1 227.0 L556.2 227.3 L559.2 227.7 L562.1 228.1 L565.0 228.6 L567.8 229.2 L570.6 229.8 L573.3 230.6 L575.2 249.3 L572.5 248.6 L569.8 247.9 L567.1 247.4 L564.2 246.9 L561.3 246.4 L558.4 246.1 L555.4 245.8Z" fill="#92924a"/>
<path d="M440.3 264.5 L442.3 262.6 L444.4 260.8 L446.6 258.9 L448.8 257.1 L451.2 255.3 L453.6 253.5 L456.1 251.8 L459.9 270.2 L457.4 271.9 L455.0 273.6 L452.7 275.4 L450.5 277.2 L448.3 279.0 L446.3 280.9 L444.3 282.7Z" fill="#92924a"/>
<path d="M572.3 230.3 L575.3 231.1 L578.2 232.1 L581.0 233.2 L582.8 251.8 L580.0 250.8 L577.1 249.9 L574.2 249.0Z" fill="#926d49"/>
<path d="M435.0 270.5 L436.9 268.2 L438.9 266.0 L441.1 263.8 L445.1 282.0 L442.9 284.2 L440.9 286.4 L439.0 288.6Z" fill="#926d49"/>
<path d="M580.0 232.8 L582.4 233.7 L584.7 234.7 L586.9 235.8 L588.5 254.5 L586.4 253.4 L584.2 252.4 L581.8 251.5Z" fill="#6d6d49"/>
<path d="M431.2 275.6 L432.5 273.6 L434.0 271.7 L435.6 269.7 L439.7 287.8 L438.1 289.8 L436.7 291.7 L435.3 293.6Z" fill="#6d6d49"/>
<path d="M586.0 235.4 L588.1 236.5 L590.2 237.7 L592.1 238.9 L594.0 240.2 L595.8 241.5 L597.3 260.0 L595.6 258.7 L593.7 257.5 L591.8 256.3 L589.8 255.1 L587.7 254.0Z" fill="#6d6d24"/>
<path d="M426.3 284.8 L427.1 282.8 L428.1 280.8 L429.2 278.8 L430.4 276.8 L431.7 274.8 L435.8 292.9 L434.5 294.8 L433.4 296.8 L432.3 298.8 L431.3 300.7 L430.5 302.7Z" fill="#6d6d24"/>
<path d="M595.1 241.0 L597.5 242.9 L599.6 245.0 L601.1 263.5 L599.0 261.4 L596.6 259.5Z" fill="#7a4a26"/>
<path d="M424.7 289.7 L425.5 286.9 L426.6 284.0 L430.8 301.9 L429.7 304.7 L428.9 307.5Z" fill="#7a4a26"/>
<path d="M599.1 244.4 L600.6 246.0 L602.0 247.7 L603.3 249.4 L604.5 251.1 L605.6 253.0 L606.5 254.8 L607.2 256.7 L607.9 258.6 L608.4 260.6 L609.8 278.9 L609.2 276.9 L608.6 275.0 L607.8 273.1 L607.0 271.3 L605.9 269.5 L604.8 267.8 L603.5 266.1 L602.1 264.5 L600.6 262.9Z" fill="#6d6d24"/>
<path d="M424.4 305.7 L423.9 303.7 L423.7 301.7 L423.5 299.6 L423.5 297.5 L423.6 295.4 L423.9 293.2 L424.3 291.1 L424.9 288.9 L429.1 306.7 L428.6 308.9 L428.2 311.0 L427.9 313.1 L427.8 315.2 L427.8 317.2 L427.9 319.3 L428.2 321.3 L428.6 323.3Z" fill="#6d6d24"/>
<g clip-path="url(#chole)" shape-rendering="crispEdges">
<rect x="400" y="200" width="230" height="95.5" fill="#6d6d49"/>
<rect x="400" y="295.5" width="230" height="28.5" fill="#926d49"/>
<rect x="400" y="324" width="230" height="40" fill="#926d6d"/>
</g>
<path d="M593.8 318.8 L591.9 320.6 L589.9 322.4 L587.9 324.1 L585.7 325.9 L583.5 327.6 L581.2 329.2 L578.8 330.9 L576.4 332.5 L573.8 334.0 L571.3 335.6 L568.6 337.0 L565.9 338.5 L563.1 339.9 L560.3 341.2 L557.4 342.5 L554.5 343.7 L551.6 344.9 L548.6 346.1 L545.5 347.1 L542.5 348.2 L539.4 349.1 L536.2 350.0 L533.1 350.9 L529.9 351.7 L526.8 352.4 L523.6 353.0 L520.4 353.6 L517.2 354.2 L514.0 354.6 L510.9 355.0 L507.7 355.4 L504.5 355.6 L501.4 355.8 L498.3 356.0 L495.2 356.0 L492.1 356.0 L489.1 356.0 L486.1 355.8 L483.1 355.6 L480.2 355.4 L477.4 355.0 L474.6 354.6 L471.8 354.2 L469.1 353.6 L466.5 353.0 L463.9 352.4 L461.4 351.6 L459.0 350.9 L456.6 350.0 L454.3 349.1 L452.1 348.1 L450.0 347.1 L447.9 346.0 L446.0 344.9 L444.1 343.7 L442.3 342.5 L440.6 341.2 L439.1 339.8 L437.6 338.4 L436.2 337.0 L434.9 335.5 L433.7 334.0 L432.6 332.4 L431.7 330.8 L430.8 329.2 L430.0 327.5 L429.4 325.8 L428.8 324.1 L428.4 322.3 L428.1 320.5 L427.9 318.7 L427.8 316.9 L427.8 315.0 L427.9 313.1 L428.1 311.2 L428.5 309.3 L428.9 307.4 L429.5 305.5 L430.2 303.6 L430.9 301.6 L431.8 299.7 L432.8 297.8 L433.9 295.8 L435.1 293.9 L436.4 292.0 L437.8 290.1 L439.3 288.2 L440.9 286.3 L442.6 284.5 L444.4 282.6 L446.3 280.8 L448.3 279.0 L450.3 277.3 L452.5 275.5 L454.7 273.8 L457.0 272.2 L459.4 270.5 L461.8 268.9 L464.4 267.4 L466.9 265.8 L469.6 264.4 L472.3 262.9 L475.1 261.5 L477.9 260.2 L480.8 258.9 L483.7 257.7 L486.6 256.5 L489.6 255.3 L492.7 254.3 L495.7 253.2 L498.8 252.3 L502.0 251.4 L505.1 250.5 L508.3 249.7 L511.4 249.0 L514.6 248.4 L517.8 247.8 L521.0 247.2 L524.2 246.8 L527.3 246.4 L530.5 246.0 L533.7 245.8 L536.8 245.6 L539.9 245.4 L543.0 245.4 L546.1 245.4 L549.1 245.4 L552.1 245.6 L555.1 245.8 L558.0 246.0 L560.8 246.4 L563.6 246.8 L566.4 247.2 L569.1 247.8 L571.7 248.4 L574.3 249.0 L576.8 249.8 L579.2 250.5 L581.6 251.4 L583.9 252.3 L586.1 253.3 L588.2 254.3 L590.3 255.4 L592.2 256.5 L594.1 257.7 L595.9 258.9 L597.6 260.2 L599.1 261.6 L600.6 263.0 L602.0 264.4 L603.3 265.9 L604.5 267.4 L605.6 269.0 L606.5 270.6 L607.4 272.2 L608.2 273.9 L608.8 275.6 L609.4 277.3 L609.8 279.1 L610.1 280.9 L610.3 282.7 L610.4 284.5 L610.4 286.4 L610.3 288.3 L610.1 290.2 L609.7 292.1 L609.3 294.0 L608.7 295.9 L608.0 297.8 L607.3 299.8 L606.4 301.7 L605.4 303.6 L604.3 305.6 L603.1 307.5 L601.8 309.4 L600.4 311.3 L598.9 313.2 L597.3 315.1 L595.6 316.9 L593.8 318.8Z" fill="none" stroke="#7e7e3c" stroke-width="1.7"/>
<path d="M593.8 318.8 L591.9 320.6 L589.9 322.4 L587.9 324.1 L585.7 325.9 L583.5 327.6 L581.2 329.2 L578.8 330.9 L576.4 332.5 L573.8 334.0 L571.3 335.6 L568.6 337.0 L565.9 338.5 L563.1 339.9 L560.3 341.2 L557.4 342.5 L554.5 343.7 L551.6 344.9 L548.6 346.1 L545.5 347.1 L542.5 348.2 L539.4 349.1 L536.2 350.0 L533.1 350.9 L529.9 351.7 L526.8 352.4 L523.6 353.0 L520.4 353.6 L517.2 354.2 L514.0 354.6 L510.9 355.0 L507.7 355.4 L504.5 355.6 L501.4 355.8 L498.3 356.0 L495.2 356.0 L492.1 356.0 L489.1 356.0 L486.1 355.8 L483.1 355.6 L480.2 355.4 L477.4 355.0 L474.6 354.6 L471.8 354.2 L469.1 353.6 L466.5 353.0 L463.9 352.4 L461.4 351.6 L459.0 350.9 L456.6 350.0 L454.3 349.1 L452.1 348.1 L450.0 347.1 L447.9 346.0 L446.0 344.9 L444.1 343.7 L442.3 342.5 L440.6 341.2 L439.1 339.8 L437.6 338.4 L436.2 337.0 L434.9 335.5 L433.7 334.0 L432.6 332.4 L431.7 330.8 L430.8 329.2 L430.0 327.5 L429.4 325.8 L428.8 324.1 L428.4 322.3 L428.1 320.5 L427.9 318.7 L427.8 316.9 L427.8 315.0 L427.9 313.1 L428.1 311.2 L428.5 309.3 L428.9 307.4 L429.5 305.5 L430.2 303.6 L430.9 301.6 L431.8 299.7 L432.8 297.8 L433.9 295.8 L435.1 293.9 L436.4 292.0 L437.8 290.1 L439.3 288.2 L440.9 286.3 L442.6 284.5 L444.4 282.6 L446.3 280.8 L448.3 279.0 L450.3 277.3 L452.5 275.5 L454.7 273.8 L457.0 272.2 L459.4 270.5 L461.8 268.9 L464.4 267.4 L466.9 265.8 L469.6 264.4 L472.3 262.9 L475.1 261.5 L477.9 260.2 L480.8 258.9 L483.7 257.7 L486.6 256.5 L489.6 255.3 L492.7 254.3 L495.7 253.2 L498.8 252.3 L502.0 251.4 L505.1 250.5 L508.3 249.7 L511.4 249.0 L514.6 248.4 L517.8 247.8 L521.0 247.2 L524.2 246.8 L527.3 246.4 L530.5 246.0 L533.7 245.8 L536.8 245.6 L539.9 245.4 L543.0 245.4 L546.1 245.4 L549.1 245.4 L552.1 245.6 L555.1 245.8 L558.0 246.0 L560.8 246.4 L563.6 246.8 L566.4 247.2 L569.1 247.8 L571.7 248.4 L574.3 249.0 L576.8 249.8 L579.2 250.5 L581.6 251.4 L583.9 252.3 L586.1 253.3 L588.2 254.3 L590.3 255.4 L592.2 256.5 L594.1 257.7 L595.9 258.9 L597.6 260.2 L599.1 261.6 L600.6 263.0 L602.0 264.4 L603.3 265.9 L604.5 267.4 L605.6 269.0 L606.5 270.6 L607.4 272.2 L608.2 273.9 L608.8 275.6 L609.4 277.3 L609.8 279.1 L610.1 280.9 L610.3 282.7 L610.4 284.5 L610.4 286.4 L610.3 288.3 L610.1 290.2 L609.7 292.1 L609.3 294.0 L608.7 295.9 L608.0 297.8 L607.3 299.8 L606.4 301.7 L605.4 303.6 L604.3 305.6 L603.1 307.5 L601.8 309.4 L600.4 311.3 L598.9 313.2 L597.3 315.1 L595.6 316.9 L593.8 318.8Z" fill="none" stroke="#2a2a0c" stroke-width="0.9"/>
</g>
<path d="M592.2 301.1 L590.2 303.0 L588.2 304.8 L586.2 306.6 L584.0 308.4 L581.7 310.1 L579.4 311.8 L577.0 313.5 L574.5 315.1 L571.9 316.7 L569.3 318.2 L566.6 319.7 L563.9 321.2 L561.0 322.6 L558.2 324.0 L555.3 325.3 L552.3 326.5 L549.3 327.7 L546.2 328.9 L543.2 330.0 L540.0 331.0 L536.9 332.0 L533.7 332.9 L530.5 333.8 L527.3 334.6 L524.1 335.3 L520.9 336.0 L517.6 336.6 L514.4 337.1 L511.2 337.6 L507.9 338.0 L504.7 338.4 L501.5 338.6 L498.3 338.8 L495.1 339.0 L492.0 339.0 L488.9 339.0 L485.8 339.0 L482.8 338.8 L479.8 338.6 L476.8 338.3 L473.9 338.0 L471.0 337.6 L468.2 337.1 L465.5 336.6 L462.8 336.0 L460.2 335.3 L457.7 334.6 L455.2 333.8 L452.8 332.9 L450.5 332.0 L448.2 331.0 L446.1 329.9 L444.0 328.8 L442.0 327.7 L440.1 326.5 L438.3 325.2 L436.6 323.9 L435.0 322.5 L433.5 321.1 L432.1 319.7 L430.8 318.2 L429.5 316.6 L428.4 315.0 L427.5 313.4 L426.6 311.7 L425.8 310.0 L425.1 308.3 L424.6 306.5 L424.1 304.7 L423.8 302.9 L423.6 301.1 L423.5 299.2 L423.5 297.3 L423.6 295.4 L423.9 293.5 L424.2 291.6 L424.7 289.6 L425.2 287.7 L425.9 285.7 L426.7 283.7 L427.6 281.8 L428.6 279.8 L429.8 277.9 L431.0 275.9 L432.3 274.0 L433.7 272.0 L435.3 270.1 L436.9 268.2 L438.6 266.3 L440.4 264.5 L442.4 262.6 L444.4 260.8 L446.4 259.0 L448.6 257.2 L450.9 255.5 L453.2 253.8 L455.6 252.1 L458.1 250.5 L460.7 248.9 L463.3 247.4 L466.0 245.9 L468.7 244.4 L471.6 243.0 L474.4 241.6 L477.3 240.3 L480.3 239.1 L483.3 237.9 L486.4 236.7 L489.4 235.6 L492.6 234.6 L495.7 233.6 L498.9 232.7 L502.1 231.8 L505.3 231.0 L508.5 230.3 L511.7 229.6 L515.0 229.0 L518.2 228.5 L521.4 228.0 L524.7 227.6 L527.9 227.2 L531.1 227.0 L534.3 226.8 L537.5 226.6 L540.6 226.6 L543.7 226.6 L546.8 226.6 L549.8 226.8 L552.8 227.0 L555.8 227.3 L558.7 227.6 L561.6 228.0 L564.4 228.5 L567.1 229.0 L569.8 229.6 L572.4 230.3 L574.9 231.0 L577.4 231.8 L579.8 232.7 L582.1 233.6 L584.4 234.6 L586.5 235.7 L588.6 236.8 L590.6 237.9 L592.5 239.1 L594.3 240.4 L596.0 241.7 L597.6 243.1 L599.1 244.5 L600.5 245.9 L601.8 247.4 L603.1 249.0 L604.2 250.6 L605.1 252.2 L606.0 253.9 L606.8 255.6 L607.5 257.3 L608.0 259.1 L608.5 260.9 L608.8 262.7 L609.0 264.5 L609.1 266.4 L609.1 268.3 L609.0 270.2 L608.7 272.1 L608.4 274.0 L607.9 276.0 L607.4 277.9 L606.7 279.9 L605.9 281.9 L605.0 283.8 L604.0 285.8 L602.8 287.7 L601.6 289.7 L600.3 291.6 L598.9 293.6 L597.3 295.5 L595.7 297.4 L594.0 299.3 L592.2 301.1Z" fill="none" stroke="#7e7e3c" stroke-width="1.6"/>
<path d="M592.2 301.1 L590.2 303.0 L588.2 304.8 L586.2 306.6 L584.0 308.4 L581.7 310.1 L579.4 311.8 L577.0 313.5 L574.5 315.1 L571.9 316.7 L569.3 318.2 L566.6 319.7 L563.9 321.2 L561.0 322.6 L558.2 324.0 L555.3 325.3 L552.3 326.5 L549.3 327.7 L546.2 328.9 L543.2 330.0 L540.0 331.0 L536.9 332.0 L533.7 332.9 L530.5 333.8 L527.3 334.6 L524.1 335.3 L520.9 336.0 L517.6 336.6 L514.4 337.1 L511.2 337.6 L507.9 338.0 L504.7 338.4 L501.5 338.6 L498.3 338.8 L495.1 339.0 L492.0 339.0 L488.9 339.0 L485.8 339.0 L482.8 338.8 L479.8 338.6 L476.8 338.3 L473.9 338.0 L471.0 337.6 L468.2 337.1 L465.5 336.6 L462.8 336.0 L460.2 335.3 L457.7 334.6 L455.2 333.8 L452.8 332.9 L450.5 332.0 L448.2 331.0 L446.1 329.9 L444.0 328.8 L442.0 327.7 L440.1 326.5 L438.3 325.2 L436.6 323.9 L435.0 322.5 L433.5 321.1 L432.1 319.7 L430.8 318.2 L429.5 316.6 L428.4 315.0 L427.5 313.4 L426.6 311.7 L425.8 310.0 L425.1 308.3 L424.6 306.5 L424.1 304.7 L423.8 302.9 L423.6 301.1 L423.5 299.2 L423.5 297.3 L423.6 295.4 L423.9 293.5 L424.2 291.6 L424.7 289.6 L425.2 287.7 L425.9 285.7 L426.7 283.7 L427.6 281.8 L428.6 279.8 L429.8 277.9 L431.0 275.9 L432.3 274.0 L433.7 272.0 L435.3 270.1 L436.9 268.2 L438.6 266.3 L440.4 264.5 L442.4 262.6 L444.4 260.8 L446.4 259.0 L448.6 257.2 L450.9 255.5 L453.2 253.8 L455.6 252.1 L458.1 250.5 L460.7 248.9 L463.3 247.4 L466.0 245.9 L468.7 244.4 L471.6 243.0 L474.4 241.6 L477.3 240.3 L480.3 239.1 L483.3 237.9 L486.4 236.7 L489.4 235.6 L492.6 234.6 L495.7 233.6 L498.9 232.7 L502.1 231.8 L505.3 231.0 L508.5 230.3 L511.7 229.6 L515.0 229.0 L518.2 228.5 L521.4 228.0 L524.7 227.6 L527.9 227.2 L531.1 227.0 L534.3 226.8 L537.5 226.6 L540.6 226.6 L543.7 226.6 L546.8 226.6 L549.8 226.8 L552.8 227.0 L555.8 227.3 L558.7 227.6 L561.6 228.0 L564.4 228.5 L567.1 229.0 L569.8 229.6 L572.4 230.3 L574.9 231.0 L577.4 231.8 L579.8 232.7 L582.1 233.6 L584.4 234.6 L586.5 235.7 L588.6 236.8 L590.6 237.9 L592.5 239.1 L594.3 240.4 L596.0 241.7 L597.6 243.1 L599.1 244.5 L600.5 245.9 L601.8 247.4 L603.1 249.0 L604.2 250.6 L605.1 252.2 L606.0 253.9 L606.8 255.6 L607.5 257.3 L608.0 259.1 L608.5 260.9 L608.8 262.7 L609.0 264.5 L609.1 266.4 L609.1 268.3 L609.0 270.2 L608.7 272.1 L608.4 274.0 L607.9 276.0 L607.4 277.9 L606.7 279.9 L605.9 281.9 L605.0 283.8 L604.0 285.8 L602.8 287.7 L601.6 289.7 L600.3 291.6 L598.9 293.6 L597.3 295.5 L595.7 297.4 L594.0 299.3 L592.2 301.1Z" fill="none" stroke="#2a2a0c" stroke-width="0.8"/>
</g>
<path d="M595.9 296.3 L593.8 298.3 L591.7 300.2 L589.5 302.1 L587.1 304.0 L584.7 305.9 L582.2 307.7 L579.6 309.5 L576.9 311.2 L574.2 312.9 L571.4 314.6 L568.5 316.2 L565.5 317.8 L562.5 319.3 L559.4 320.8 L556.3 322.2 L553.1 323.5 L549.9 324.8 L546.6 326.1 L543.3 327.2 L540.0 328.3 L536.6 329.4 L533.2 330.4 L529.8 331.3 L526.3 332.2 L522.9 333.0 L519.4 333.7 L515.9 334.3 L512.4 334.9 L509.0 335.4 L505.5 335.8 L502.1 336.2 L498.6 336.5 L495.2 336.7 L491.8 336.9 L488.4 336.9 L485.1 336.9 L481.8 336.9 L478.5 336.7 L475.3 336.5 L472.1 336.2 L469.0 335.8 L465.9 335.4 L462.9 334.9 L460.0 334.3 L457.1 333.6 L454.3 332.9 L451.6 332.1 L448.9 331.3 L446.4 330.4 L443.9 329.4 L441.5 328.3 L439.1 327.2 L436.9 326.0 L434.8 324.8 L432.7 323.5 L430.8 322.1 L429.0 320.7 L427.2 319.2 L425.6 317.7 L424.1 316.2 L422.7 314.5 L421.4 312.9 L420.2 311.2 L419.2 309.4 L418.2 307.6 L417.4 305.8 L416.7 304.0 L416.1 302.1 L415.6 300.1 L415.3 298.2 L415.0 296.2 L414.9 294.2 L414.9 292.2 L415.1 290.1 L415.3 288.1 L415.7 286.0 L416.2 283.9 L416.8 281.8 L417.5 279.7 L418.4 277.6 L419.4 275.5 L420.4 273.4 L421.6 271.3 L423.0 269.2 L424.4 267.1 L425.9 265.0 L427.5 263.0 L429.3 260.9 L431.1 258.9 L433.1 256.9 L435.2 254.9 L437.3 253.0 L439.5 251.1 L441.9 249.2 L444.3 247.3 L446.8 245.5 L449.4 243.7 L452.1 242.0 L454.8 240.3 L457.6 238.6 L460.5 237.0 L463.5 235.4 L466.5 233.9 L469.6 232.4 L472.7 231.0 L475.9 229.7 L479.1 228.4 L482.4 227.1 L485.7 226.0 L489.0 224.9 L492.4 223.8 L495.8 222.8 L499.2 221.9 L502.7 221.0 L506.1 220.2 L509.6 219.5 L513.1 218.9 L516.6 218.3 L520.0 217.8 L523.5 217.4 L526.9 217.0 L530.4 216.7 L533.8 216.5 L537.2 216.3 L540.6 216.3 L543.9 216.3 L547.2 216.3 L550.5 216.5 L553.7 216.7 L556.9 217.0 L560.0 217.4 L563.1 217.8 L566.1 218.3 L569.0 218.9 L571.9 219.6 L574.7 220.3 L577.4 221.1 L580.1 221.9 L582.6 222.8 L585.1 223.8 L587.5 224.9 L589.9 226.0 L592.1 227.2 L594.2 228.4 L596.3 229.7 L598.2 231.1 L600.0 232.5 L601.8 234.0 L603.4 235.5 L604.9 237.0 L606.3 238.7 L607.6 240.3 L608.8 242.0 L609.8 243.8 L610.8 245.6 L611.6 247.4 L612.3 249.2 L612.9 251.1 L613.4 253.1 L613.7 255.0 L614.0 257.0 L614.1 259.0 L614.1 261.0 L613.9 263.1 L613.7 265.1 L613.3 267.2 L612.8 269.3 L612.2 271.4 L611.5 273.5 L610.6 275.6 L609.6 277.7 L608.6 279.8 L607.4 281.9 L606.0 284.0 L604.6 286.1 L603.1 288.2 L601.5 290.2 L599.7 292.3 L597.9 294.3 L595.9 296.3Z" fill="none" stroke="#7e7e3c" stroke-width="1.8"/>
<path d="M595.9 296.3 L593.8 298.3 L591.7 300.2 L589.5 302.1 L587.1 304.0 L584.7 305.9 L582.2 307.7 L579.6 309.5 L576.9 311.2 L574.2 312.9 L571.4 314.6 L568.5 316.2 L565.5 317.8 L562.5 319.3 L559.4 320.8 L556.3 322.2 L553.1 323.5 L549.9 324.8 L546.6 326.1 L543.3 327.2 L540.0 328.3 L536.6 329.4 L533.2 330.4 L529.8 331.3 L526.3 332.2 L522.9 333.0 L519.4 333.7 L515.9 334.3 L512.4 334.9 L509.0 335.4 L505.5 335.8 L502.1 336.2 L498.6 336.5 L495.2 336.7 L491.8 336.9 L488.4 336.9 L485.1 336.9 L481.8 336.9 L478.5 336.7 L475.3 336.5 L472.1 336.2 L469.0 335.8 L465.9 335.4 L462.9 334.9 L460.0 334.3 L457.1 333.6 L454.3 332.9 L451.6 332.1 L448.9 331.3 L446.4 330.4 L443.9 329.4 L441.5 328.3 L439.1 327.2 L436.9 326.0 L434.8 324.8 L432.7 323.5 L430.8 322.1 L429.0 320.7 L427.2 319.2 L425.6 317.7 L424.1 316.2 L422.7 314.5 L421.4 312.9 L420.2 311.2 L419.2 309.4 L418.2 307.6 L417.4 305.8 L416.7 304.0 L416.1 302.1 L415.6 300.1 L415.3 298.2 L415.0 296.2 L414.9 294.2 L414.9 292.2 L415.1 290.1 L415.3 288.1 L415.7 286.0 L416.2 283.9 L416.8 281.8 L417.5 279.7 L418.4 277.6 L419.4 275.5 L420.4 273.4 L421.6 271.3 L423.0 269.2 L424.4 267.1 L425.9 265.0 L427.5 263.0 L429.3 260.9 L431.1 258.9 L433.1 256.9 L435.2 254.9 L437.3 253.0 L439.5 251.1 L441.9 249.2 L444.3 247.3 L446.8 245.5 L449.4 243.7 L452.1 242.0 L454.8 240.3 L457.6 238.6 L460.5 237.0 L463.5 235.4 L466.5 233.9 L469.6 232.4 L472.7 231.0 L475.9 229.7 L479.1 228.4 L482.4 227.1 L485.7 226.0 L489.0 224.9 L492.4 223.8 L495.8 222.8 L499.2 221.9 L502.7 221.0 L506.1 220.2 L509.6 219.5 L513.1 218.9 L516.6 218.3 L520.0 217.8 L523.5 217.4 L526.9 217.0 L530.4 216.7 L533.8 216.5 L537.2 216.3 L540.6 216.3 L543.9 216.3 L547.2 216.3 L550.5 216.5 L553.7 216.7 L556.9 217.0 L560.0 217.4 L563.1 217.8 L566.1 218.3 L569.0 218.9 L571.9 219.6 L574.7 220.3 L577.4 221.1 L580.1 221.9 L582.6 222.8 L585.1 223.8 L587.5 224.9 L589.9 226.0 L592.1 227.2 L594.2 228.4 L596.3 229.7 L598.2 231.1 L600.0 232.5 L601.8 234.0 L603.4 235.5 L604.9 237.0 L606.3 238.7 L607.6 240.3 L608.8 242.0 L609.8 243.8 L610.8 245.6 L611.6 247.4 L612.3 249.2 L612.9 251.1 L613.4 253.1 L613.7 255.0 L614.0 257.0 L614.1 259.0 L614.1 261.0 L613.9 263.1 L613.7 265.1 L613.3 267.2 L612.8 269.3 L612.2 271.4 L611.5 273.5 L610.6 275.6 L609.6 277.7 L608.6 279.8 L607.4 281.9 L606.0 284.0 L604.6 286.1 L603.1 288.2 L601.5 290.2 L599.7 292.3 L597.9 294.3 L595.9 296.3Z" fill="none" stroke="#2a2a0c" stroke-width="1.0"/>
<path d="M430.3 256.2 L429.4 256.9 L428.3 257.5 L427.0 258.0 L425.6 258.2 L424.3 258.3 L423.1 258.1 L422.1 257.8 L421.3 257.2 L420.9 256.5 L420.9 255.7 L421.2 254.9 L421.8 254.1 L422.7 253.4 L423.9 252.8 L425.2 252.3 L426.5 252.0 L427.9 252.0 L429.1 252.1 L430.1 252.5 L430.8 253.1 L431.2 253.8 L431.3 254.5 L431.0 255.4Z" fill="#86743e" stroke="#2a2a0c" stroke-width="0.9"/>
<path d="M428.6 256.6 L428.1 257.0 L427.5 257.3 L426.8 257.6 L426.0 257.7 L425.3 257.8 L424.6 257.7 L424.1 257.5 L423.7 257.2 L423.5 256.8 L423.4 256.4 L423.6 255.9 L424.0 255.5 L424.5 255.1 L425.1 254.7 L425.8 254.5 L426.5 254.4 L427.3 254.3 L427.9 254.4 L428.5 254.6 L428.8 254.9 L429.1 255.3 L429.1 255.7 L428.9 256.2Z" fill="#b6b66d"/>
<path d="M616.8 234.6 L615.8 235.3 L614.7 236.0 L613.4 236.4 L612.0 236.7 L610.7 236.7 L609.5 236.6 L608.5 236.2 L607.7 235.6 L607.3 235.0 L607.3 234.2 L607.6 233.3 L608.2 232.5 L609.1 231.8 L610.3 231.2 L611.6 230.7 L613.0 230.5 L614.3 230.4 L615.5 230.6 L616.5 230.9 L617.2 231.5 L617.6 232.2 L617.7 233.0 L617.4 233.8Z" fill="#86743e" stroke="#2a2a0c" stroke-width="0.9"/>
<path d="M615.0 235.0 L614.5 235.4 L613.9 235.8 L613.2 236.0 L612.4 236.2 L611.7 236.2 L611.1 236.1 L610.5 235.9 L610.1 235.6 L609.9 235.2 L609.9 234.8 L610.0 234.3 L610.4 233.9 L610.9 233.5 L611.5 233.2 L612.2 232.9 L612.9 232.8 L613.7 232.8 L614.3 232.8 L614.9 233.0 L615.3 233.3 L615.5 233.7 L615.5 234.1 L615.3 234.6Z" fill="#b6b66d"/>
<path d="M508.9 341.8 L508.0 342.6 L506.8 343.2 L505.5 343.6 L504.2 343.9 L502.8 343.9 L501.6 343.8 L500.6 343.4 L499.9 342.9 L499.5 342.2 L499.4 341.4 L499.7 340.6 L500.4 339.8 L501.3 339.0 L502.4 338.4 L503.8 337.9 L505.1 337.7 L506.4 337.6 L507.7 337.8 L508.7 338.2 L509.4 338.7 L509.8 339.4 L509.8 340.2 L509.5 341.0Z" fill="#86743e" stroke="#2a2a0c" stroke-width="0.9"/>
<path d="M507.2 342.2 L506.7 342.6 L506.0 343.0 L505.3 343.2 L504.6 343.4 L503.9 343.4 L503.2 343.3 L502.7 343.1 L502.3 342.8 L502.0 342.4 L502.0 342.0 L502.2 341.6 L502.5 341.1 L503.0 340.7 L503.7 340.4 L504.4 340.1 L505.1 340.0 L505.8 340.0 L506.5 340.1 L507.0 340.3 L507.4 340.6 L507.6 340.9 L507.7 341.4 L507.5 341.8Z" fill="#b6b66d"/>
<path d="M500.0 341.0 L509.2 340.6 M504.7 338.2 L504.5 343.4" stroke="#2a2a0c" stroke-width="0.6" fill="none"/>
</g>
<path d="M478.0 161.0 L722.0 220.0 L550.3 392.3 L306.3 332.3" fill="none" stroke="#c69a3e" stroke-width="1"/>
<path d="M306.3 332.3 L478.0 161.0" fill="none" stroke="#a8964a" stroke-width="0.8"/>
    <g id="axis">
      <path d="M977.9 497.2L974.6 483.6" stroke="#1a1a9a" stroke-width="1.1"/>
      <path d="M973.8 482.4l-1 5.6 3.4-.8z" fill="#10109a"/>
      <path d="M977.9 497.2L984.6 490.2" stroke="#18a018" stroke-width="1.1"/>
      <path d="M985.6 489.2l-4.2 1.6 2.4 2.4z" fill="#18a018"/>
      <path d="M977.9 497.2L991.6 500.4" stroke="#a81010" stroke-width="1.1"/>
      <path d="M992.8 500.7l-5.4-2.9-.8 3.4z" fill="#a01010"/>
      <path d="M975.6 479.4h2.4l-2.4 3h2.4" fill="none" stroke="#3a3a4a" stroke-width=".7"/>
      <path d="M987 486.6l1.2 1.6 1.2-1.6M988.2 488.2v1.8" fill="none" stroke="#5a5a86" stroke-width=".7"/>
      <path d="M993.8 497.6l2.6 3.2M996.4 497.6l-2.6 3.2" fill="none" stroke="#5a5a86" stroke-width=".7"/>
    </g>
  </svg>
</div>
<div class="hl" style="left:197px;top:519.3px;width:59px;background:#b4b4b4"></div>
<div class="hl" style="left:340px;top:519.3px;width:660px;background:#a4a4a4"></div>

<!-- bottom tabs -->
<svg class="abs" style="left:203px;top:520.3px" width="10" height="10" viewBox="0 0 10 10">
  <path d="M1 0.8h4.6v1.9H3v1.3h2v1.7H3v2.9H1z" fill="#e0001a"/><circle cx="6.2" cy="6.1" r="1.7" fill="none" stroke="#2a4fb0" stroke-width="1.3"/></svg>
<div class="t" style="letter-spacing:-0.330px;left:214px;top:520.5px">Start page</div>
<div class="abs" style="left:242.6px;top:521.8px;width:7px;height:7px;background:#ececec;border:1px solid #bcbcbc;border-radius:1px"></div>
<svg class="abs" style="left:242.6px;top:521.8px" width="7" height="7" viewBox="0 0 7 7"><path d="M2.2 2.2l2.6 2.6M4.8 2.2l-2.6 2.6" stroke="#fff" stroke-width="0.9"/></svg>
<svg class="abs" style="left:263px;top:520.3px" width="10" height="10" viewBox="0 0 10 10">
  <path d="M1 0.8h4.6v1.9H3v1.3h2v1.7H3v2.9H1z" fill="#e0001a"/><circle cx="6.2" cy="6.1" r="1.7" fill="none" stroke="#2a4fb0" stroke-width="1.3"/></svg>
<div class="t" style="letter-spacing:-0.310px;left:273.7px;top:520.5px">HappyRing3 v1 : 1*</div>
<svg class="abs" style="left:325.7px;top:521.8px" width="7" height="7" viewBox="0 0 7 7"><rect x="0" y="0" width="7" height="7" rx="1" fill="#f4703a"/><path d="M2 2l3 3M5 2l-3 3" stroke="#fff" stroke-width="0.9"/></svg>

<!-- status bar -->
<svg class="abs" style="left:900px;top:536px" width="7" height="8" viewBox="0 0 7 8"><rect x="1" y="0.6" width="4.6" height="6.4" rx="2" fill="#fff" stroke="#555" stroke-width="0.9"/><path d="M3.3 1v2" stroke="#555" stroke-width="0.7"/></svg>
<div class="t" style="letter-spacing:-0.467px;left:909.8px;top:534.7px">CAD</div>
<svg class="abs" style="left:923px;top:538.4px" width="3.4" height="2.2" viewBox="0 0 3.4 2.2"><path d="M0 0.1h3.4L1.7 2.1z" fill="#000"/></svg>
<div class="t" style="letter-spacing:-0.223px;left:933.2px;top:534.7px">473.55 mm x 261.51 mm</div>

</body></html>
